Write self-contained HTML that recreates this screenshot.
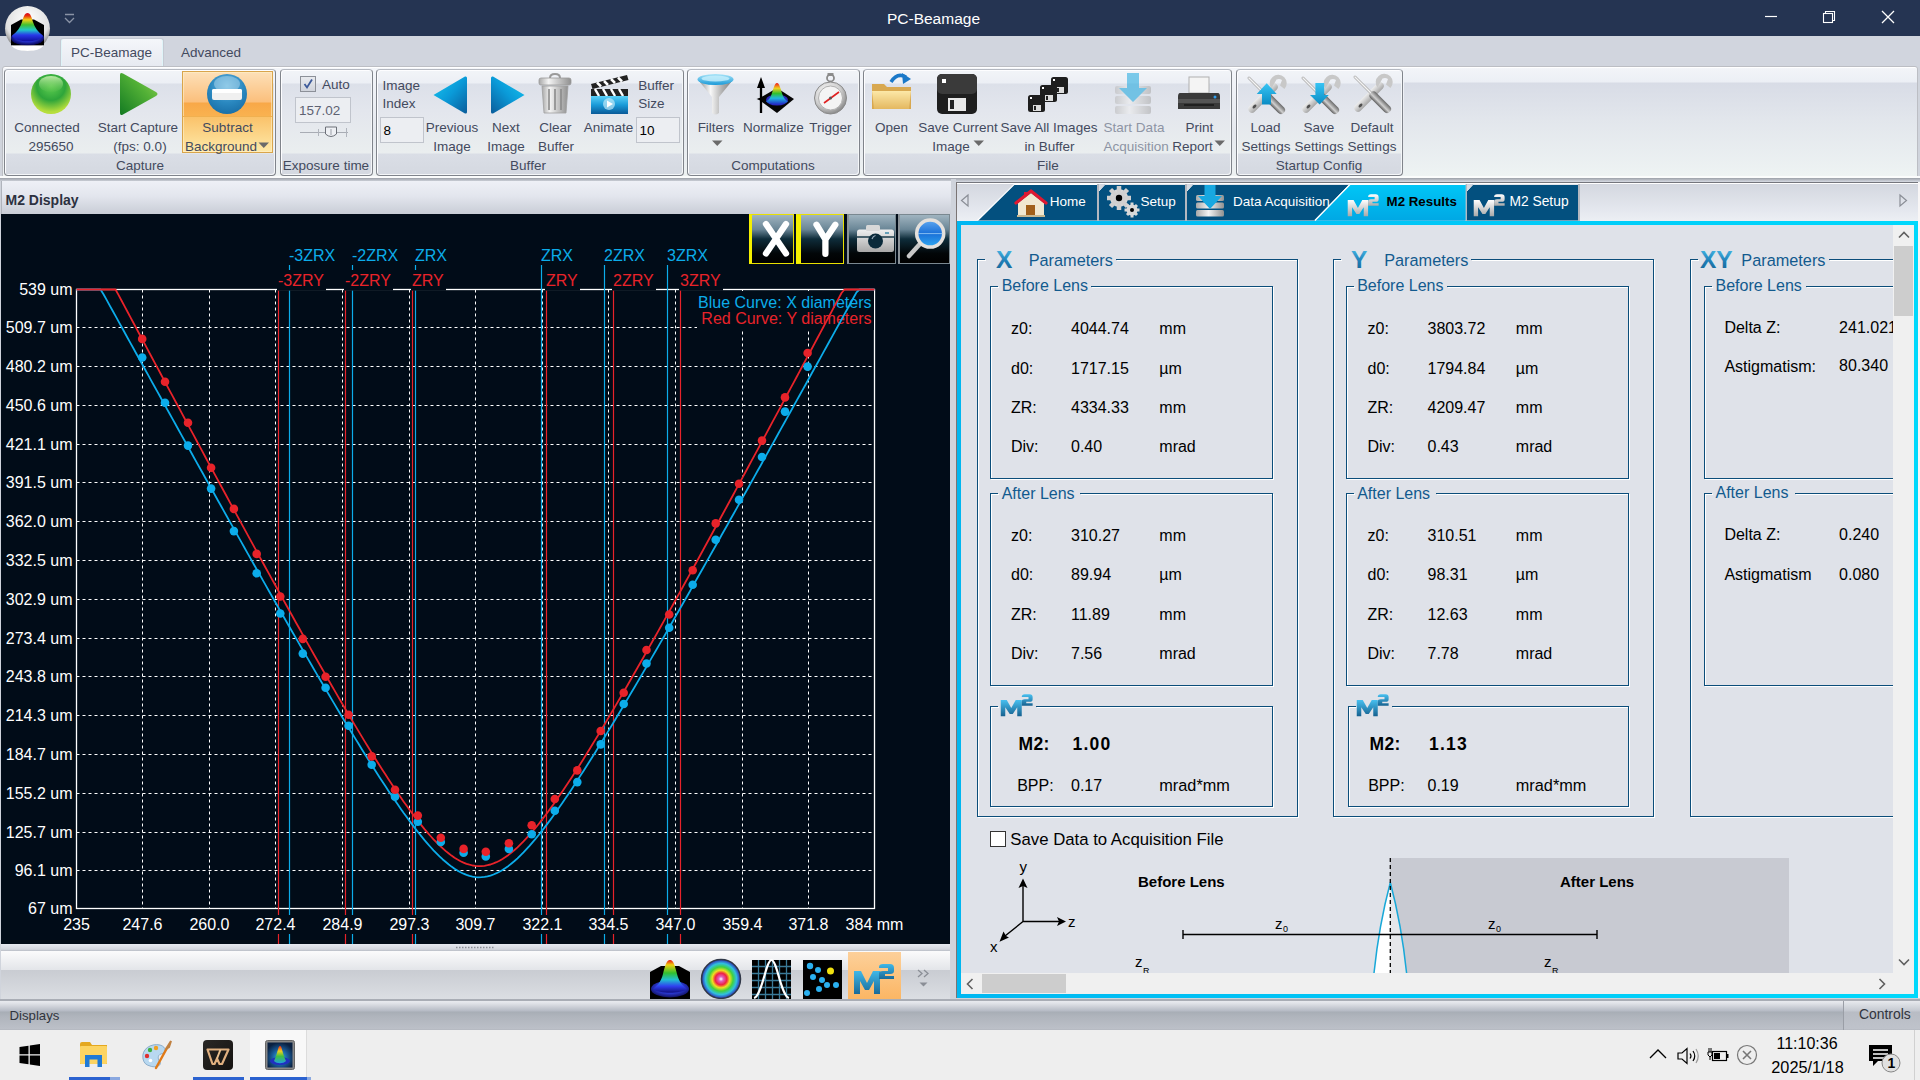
<!DOCTYPE html>
<html><head><meta charset="utf-8"><title>PC-Beamage</title>
<style>
*{box-sizing:border-box;margin:0;padding:0}
html,body{width:1920px;height:1080px;overflow:hidden}
body{position:relative;background:#d0d4dc;font-family:"Liberation Sans",sans-serif;color:#000}
.a{position:absolute}
.t{position:absolute;white-space:nowrap;line-height:1}
svg{overflow:visible}
</style></head><body>
<div class="a" style="left:0px;top:0px;width:1920px;height:36px;background:#253452"></div>
<div class="t" style="top:10.68px;font-size:15.5px;color:#fff;left:633.50px;width:600px;text-align:center;">PC-Beamage</div>
<svg class="a" style="left:1755px;top:7px;" width="150" height="20" viewBox="0 0 150 20"><line x1="10" y1="9.5" x2="22" y2="9.5" stroke="#fff" stroke-width="1.2"/><rect x="68.5" y="6.5" width="9" height="9" fill="none" stroke="#fff" stroke-width="1.1"/><path d="M70.5 6.5 V4.5 H79.5 V13.5 H77.5" fill="none" stroke="#fff" stroke-width="1.1"/><path d="M127 4 L139 16 M139 4 L127 16" stroke="#fff" stroke-width="1.3"/></svg>
<svg class="a" style="left:64px;top:13px;" width="12" height="12" viewBox="0 0 12 12"><path d="M1 1.5 H10" stroke="#8a93a6" stroke-width="1.5"/><path d="M1 5 L5.5 9.5 L10 5" fill="none" stroke="#8a93a6" stroke-width="1.3"/></svg>
<div class="a" style="left:0px;top:36px;width:1920px;height:31px;background:#d1d5de"></div>
<svg class="a" style="left:4px;top:5px;" width="48" height="48" viewBox="0 0 48 48"><defs><radialGradient id="orbg" cx="50%" cy="30%" r="65%"><stop offset="0" stop-color="#ffffff"/><stop offset="0.75" stop-color="#e0e0e0"/><stop offset="1" stop-color="#8a8a8a"/></radialGradient><linearGradient id="cone" x1="0" y1="0" x2="0" y2="1"><stop offset="0" stop-color="#d80820"/><stop offset="0.1" stop-color="#e83010"/><stop offset="0.24" stop-color="#f0d018"/><stop offset="0.42" stop-color="#40c030"/><stop offset="0.6" stop-color="#20c8c8"/><stop offset="0.78" stop-color="#2838e8"/><stop offset="1" stop-color="#1010a0"/></linearGradient><radialGradient id="coneb" cx="50%" cy="40%" r="55%"><stop offset="0" stop-color="#30d0d8"/><stop offset="0.5" stop-color="#3040f0"/><stop offset="1" stop-color="#0a0a60"/></radialGradient></defs><circle cx="23.5" cy="23.5" r="22.5" fill="url(#orbg)"/><path d="M7 20 L17 14.5 H30 L40 20 V40.5 H7 Z" fill="#000"/><ellipse cx="23.5" cy="33" rx="16.5" ry="7.5" fill="url(#coneb)"/><path d="M23.5 8 C20.5 8 19.5 12 18 17 C16.5 22 13 27 8 31 C12 38 35 38 39 31 C34 27 30.5 22 29 17 C27.5 12 26.5 8 23.5 8 Z" fill="url(#cone)"/><path d="M7 40.5 H40 Q35 46 23.5 46 Q12 46 7 40.5Z" fill="#fff"/></svg>
<div class="a" style="left:60px;top:38px;width:104px;height:30px;background:linear-gradient(#f4f6fa,#e6e9f0);border:1px solid #c5cad3;border-bottom:none;border-radius:3px 3px 0 0;box-shadow:inset 1px 0 0 #dff4f8, inset -1px 0 0 #dff4f8"></div>
<div class="t" style="top:46.07px;font-size:13.5px;color:#434a5e;left:-188.50px;width:600px;text-align:center;">PC-Beamage</div>
<div class="t" style="top:46.07px;font-size:13.5px;color:#434a5e;left:-89.00px;width:600px;text-align:center;">Advanced</div>
<div class="a" style="left:2px;top:66px;width:1916px;height:113px;background:linear-gradient(#f4f6fa,#e6e9ef 60%,#eef2f2);border:1px solid #bcbec4;border-radius:3px;box-shadow:0 1px 0 #fff inset"></div>
<div class="a" style="left:4px;top:69px;width:272px;height:107px;border:1px solid #80848b;border-top-color:#b4b8c0;border-radius:4px;background:linear-gradient(#f2f4f8 0px,#eceff5 13px,#dce0e9 14px,#e3e6ed 40px,#eaeeef 83px,#dadee6 84px,#d4d8e0 106px);box-shadow:inset 1px 1px 0 #fdfdff, inset -1px -1px 0 #f4f6f8"></div>
<div class="t" style="top:158.77px;font-size:13.5px;color:#434a5e;left:-160.00px;width:600px;text-align:center;">Capture</div>
<div class="a" style="left:280px;top:69px;width:93px;height:107px;border:1px solid #80848b;border-top-color:#b4b8c0;border-radius:4px;background:linear-gradient(#f2f4f8 0px,#eceff5 13px,#dce0e9 14px,#e3e6ed 40px,#eaeeef 83px,#dadee6 84px,#d4d8e0 106px);box-shadow:inset 1px 1px 0 #fdfdff, inset -1px -1px 0 #f4f6f8"></div>
<div class="t" style="top:158.77px;font-size:13.5px;color:#434a5e;left:26.00px;width:600px;text-align:center;">Exposure time</div>
<div class="a" style="left:376px;top:69px;width:308px;height:107px;border:1px solid #80848b;border-top-color:#b4b8c0;border-radius:4px;background:linear-gradient(#f2f4f8 0px,#eceff5 13px,#dce0e9 14px,#e3e6ed 40px,#eaeeef 83px,#dadee6 84px,#d4d8e0 106px);box-shadow:inset 1px 1px 0 #fdfdff, inset -1px -1px 0 #f4f6f8"></div>
<div class="t" style="top:158.77px;font-size:13.5px;color:#434a5e;left:228.00px;width:600px;text-align:center;">Buffer</div>
<div class="a" style="left:687px;top:69px;width:173px;height:107px;border:1px solid #80848b;border-top-color:#b4b8c0;border-radius:4px;background:linear-gradient(#f2f4f8 0px,#eceff5 13px,#dce0e9 14px,#e3e6ed 40px,#eaeeef 83px,#dadee6 84px,#d4d8e0 106px);box-shadow:inset 1px 1px 0 #fdfdff, inset -1px -1px 0 #f4f6f8"></div>
<div class="t" style="top:158.77px;font-size:13.5px;color:#434a5e;left:473.00px;width:600px;text-align:center;">Computations</div>
<div class="a" style="left:863px;top:69px;width:369px;height:107px;border:1px solid #80848b;border-top-color:#b4b8c0;border-radius:4px;background:linear-gradient(#f2f4f8 0px,#eceff5 13px,#dce0e9 14px,#e3e6ed 40px,#eaeeef 83px,#dadee6 84px,#d4d8e0 106px);box-shadow:inset 1px 1px 0 #fdfdff, inset -1px -1px 0 #f4f6f8"></div>
<div class="t" style="top:158.77px;font-size:13.5px;color:#434a5e;left:748.00px;width:600px;text-align:center;">File</div>
<div class="a" style="left:1236px;top:69px;width:167px;height:107px;border:1px solid #80848b;border-top-color:#b4b8c0;border-radius:4px;background:linear-gradient(#f2f4f8 0px,#eceff5 13px,#dce0e9 14px,#e3e6ed 40px,#eaeeef 83px,#dadee6 84px,#d4d8e0 106px);box-shadow:inset 1px 1px 0 #fdfdff, inset -1px -1px 0 #f4f6f8"></div>
<div class="t" style="top:158.77px;font-size:13.5px;color:#434a5e;left:1019.00px;width:600px;text-align:center;">Startup Config</div>
<div class="a" style="left:0px;top:176px;width:1920px;height:2px;background:#fbfcfc"></div>
<div class="a" style="left:0px;top:178px;width:1920px;height:3px;background:linear-gradient(#9ca0a8,#c9cdd5)"></div>
<div class="a" style="left:1404px;top:69px;width:513px;height:107px;background:linear-gradient(#f2f4f8 0px,#eceff5 13px,#d8dce6 14px,#e2e6ec 50px,#eef3f3 107px)"></div>
<svg class="a" style="left:29px;top:72px;" width="44" height="44" viewBox="0 0 44 44"><defs><radialGradient id="gs" cx="50%" cy="30%" r="65%"><stop offset="0" stop-color="#5fcf50"/><stop offset="0.55" stop-color="#2ea53a"/><stop offset="1" stop-color="#b6de3c"/></radialGradient><linearGradient id="gsh" x1="0" y1="0" x2="0" y2="1"><stop offset="0" stop-color="#c8f0b0" stop-opacity="0.9"/><stop offset="1" stop-color="#60c050" stop-opacity="0.2"/></linearGradient></defs><circle cx="22" cy="22" r="20" fill="url(#gs)"/><ellipse cx="22" cy="12" rx="12" ry="8" fill="url(#gsh)"/></svg>
<div class="t" style="top:121.07px;font-size:13.5px;color:#434a5e;left:-253.00px;width:600px;text-align:center;">Connected</div>
<div class="t" style="top:139.77px;font-size:13.5px;color:#434a5e;left:-249.00px;width:600px;text-align:center;">295650</div>
<svg class="a" style="left:118px;top:72px;" width="42" height="44" viewBox="0 0 42 44"><defs><linearGradient id="pl" x1="0" y1="1" x2="1" y2="0"><stop offset="0" stop-color="#137a22"/><stop offset="0.6" stop-color="#52b036"/><stop offset="1" stop-color="#90d050"/></linearGradient></defs><path d="M2 3 Q2 0 5 1.5 L38 20 Q41 22 38 24 L5 42.5 Q2 44 2 41 Z" fill="url(#pl)"/></svg>
<div class="t" style="top:121.07px;font-size:13.5px;color:#434a5e;left:-162.00px;width:600px;text-align:center;">Start Capture</div>
<div class="t" style="top:139.77px;font-size:13.5px;color:#434a5e;left:-160.00px;width:600px;text-align:center;">(fps: 0.0)</div>
<div class="a" style="left:182px;top:71px;width:91px;height:82px;border:1px solid #d9a54c;background:linear-gradient(#fde0b8 0,#fbbf7c 30px,#f8a848 31px,#f9b250 44px,#fac26a 45px,#fee9a8 80px);box-shadow:inset 0 0 0 1px rgba(255,240,200,0.6)"></div>
<div class="a" style="left:183px;top:116px;width:89px;height:1px;background:#f0b050"></div>
<svg class="a" style="left:205px;top:72px;" width="44" height="44" viewBox="0 0 44 44"><defs><radialGradient id="bs" cx="50%" cy="30%" r="70%"><stop offset="0" stop-color="#6ab8e0"/><stop offset="0.6" stop-color="#2a88c0"/><stop offset="1" stop-color="#1a70a8"/></radialGradient></defs><circle cx="22" cy="22" r="20" fill="url(#bs)"/><ellipse cx="22" cy="12" rx="13" ry="8" fill="#bfe0f2" opacity="0.45"/><rect x="7" y="17" width="30" height="11" rx="2" fill="#f0f0f0"/><rect x="7" y="17" width="30" height="4" rx="2" fill="#ffffff"/></svg>
<div class="t" style="top:121.07px;font-size:13.5px;color:#434a5e;left:-72.50px;width:600px;text-align:center;">Subtract</div>
<div class="t" style="top:139.77px;font-size:13.5px;color:#434a5e;left:-79.00px;width:600px;text-align:center;">Background</div>
<svg class="a" style="left:258px;top:142px;" width="12" height="8" viewBox="0 0 12 8"><path d="M0.5 0.5 H11 L5.75 6 Z" fill="#6a6a6a"/></svg>
<div class="a" style="left:300px;top:76px;width:16px;height:16px;border:1px solid #8c9098;background:linear-gradient(#e8eaee,#d0d4dc)"></div>
<svg class="a" style="left:302px;top:78px;" width="12" height="12" viewBox="0 0 12 12"><path d="M2.5 6 L5 9.5 L10 1.5" fill="none" stroke="#3c5a9a" stroke-width="1.8"/></svg>
<div class="t" style="top:77.87px;font-size:13.5px;color:#434a5e;left:322.00px;">Auto</div>
<div class="a" style="left:295px;top:97px;width:56px;height:26px;border:1px solid #c0c4cc;background:#eceef2"></div>
<div class="t" style="top:104.07px;font-size:13.5px;color:#5e6272;left:299.00px;">157.02</div>
<svg class="a" style="left:298px;top:124px;" width="52" height="16" viewBox="0 0 52 16"><line x1="2" y1="8.5" x2="50" y2="8.5" stroke="#a8acb4"/><line x1="20.5" y1="5" x2="20.5" y2="12" stroke="#b0b4bc"/><line x1="48.5" y1="4" x2="48.5" y2="13" stroke="#b0b4bc"/><path d="M27.5 3 H38.5 V10 Q33 15 27.5 10 Z" fill="#eef0f4" stroke="#6c7078"/><line x1="33" y1="5" x2="33" y2="11" stroke="#9ca0a8"/></svg>
<div class="t" style="top:78.77px;font-size:13.5px;color:#434a5e;left:382.50px;">Image</div>
<div class="t" style="top:97.37px;font-size:13.5px;color:#434a5e;left:382.50px;">Index</div>
<div class="a" style="left:380px;top:117px;width:44px;height:26px;border:1px solid #c0c4cc;background:#eceef2"></div>
<div class="t" style="top:124.07px;font-size:13.5px;color:#000;left:383.50px;">8</div>
<svg class="a" style="left:432px;top:75px;" width="37" height="40" viewBox="0 0 37 40"><defs><linearGradient id="tl" x1="1" y1="1" x2="0" y2="0"><stop offset="0" stop-color="#0a5c9a"/><stop offset="0.5" stop-color="#0a9ad8"/><stop offset="1" stop-color="#18c8f0"/></linearGradient></defs><path d="M1.5 20 L33 1.5 Q35 1 35 3 V37 Q35 39 33 38.5 Z" fill="url(#tl)"/></svg>
<div class="t" style="top:121.07px;font-size:13.5px;color:#434a5e;left:152.00px;width:600px;text-align:center;">Previous</div>
<div class="t" style="top:139.77px;font-size:13.5px;color:#434a5e;left:152.00px;width:600px;text-align:center;">Image</div>
<svg class="a" style="left:489px;top:75px;" width="37" height="40" viewBox="0 0 37 40"><defs><linearGradient id="tr" x1="0" y1="1" x2="1" y2="0"><stop offset="0" stop-color="#0a5c9a"/><stop offset="0.5" stop-color="#0a9ad8"/><stop offset="1" stop-color="#18c8f0"/></linearGradient></defs><path d="M35.5 20 L4 1.5 Q2 1 2 3 V37 Q2 39 4 38.5 Z" fill="url(#tr)"/></svg>
<div class="t" style="top:121.07px;font-size:13.5px;color:#434a5e;left:206.00px;width:600px;text-align:center;">Next</div>
<div class="t" style="top:139.77px;font-size:13.5px;color:#434a5e;left:206.00px;width:600px;text-align:center;">Image</div>
<svg class="a" style="left:537px;top:73px;" width="36" height="42" viewBox="0 0 36 42"><defs><linearGradient id="tc" x1="0" y1="0" x2="1" y2="0"><stop offset="0" stop-color="#a8a8a8"/><stop offset="0.3" stop-color="#f4f4f4"/><stop offset="0.6" stop-color="#c8c8c8"/><stop offset="1" stop-color="#909090"/></linearGradient></defs><path d="M13 5 Q13 1 18 1 Q23 1 23 5" fill="none" stroke="#9a9a9a" stroke-width="2"/><rect x="2" y="5" width="32" height="7" rx="2" fill="url(#tc)" stroke="#9a9a9a" stroke-width="0.8"/><path d="M5 13 H31 L29 40 H7 Z" fill="url(#tc)" stroke="#a0a0a0" stroke-width="0.8"/><path d="M12 16 V37 M18 16 V37 M24 16 V37" stroke="#8a8a8a" stroke-width="1.6"/></svg>
<div class="t" style="top:121.07px;font-size:13.5px;color:#434a5e;left:255.50px;width:600px;text-align:center;">Clear</div>
<div class="t" style="top:139.77px;font-size:13.5px;color:#434a5e;left:256.00px;width:600px;text-align:center;">Buffer</div>
<svg class="a" style="left:589px;top:72px;" width="41" height="43" viewBox="0 0 41 43"><defs><linearGradient id="cl" x1="0" y1="0" x2="0" y2="1"><stop offset="0" stop-color="#5ad0f8"/><stop offset="0.5" stop-color="#1a9ad8"/><stop offset="1" stop-color="#0a5a98"/></linearGradient></defs><path d="M2 12 L38 3 L39.5 8 L3.5 17 Z" fill="#222"/><path d="M8 10.5 L12 14.5 M15 9 L19 13 M22 7 L26 11 M29 5.5 L33 9.5" stroke="#fff" stroke-width="2.5"/><rect x="2" y="17" width="37" height="7" fill="#222"/><path d="M6 17 L10 24 M14 17 L18 24 M22 17 L26 24 M30 17 L34 24" stroke="#fff" stroke-width="2.5"/><rect x="2" y="24" width="37" height="18" fill="url(#cl)"/><circle cx="20" cy="32" r="6" fill="#bfe8f8" opacity="0.7"/><path d="M18 28.5 L24 32 L18 35.5Z" fill="#fff"/></svg>
<div class="t" style="top:121.07px;font-size:13.5px;color:#434a5e;left:308.50px;width:600px;text-align:center;">Animate</div>
<div class="t" style="top:78.77px;font-size:13.5px;color:#434a5e;left:638.30px;">Buffer</div>
<div class="t" style="top:97.37px;font-size:13.5px;color:#434a5e;left:638.30px;">Size</div>
<div class="a" style="left:636px;top:117px;width:44px;height:26px;border:1px solid #c0c4cc;background:#eceef2"></div>
<div class="t" style="top:124.07px;font-size:13.5px;color:#000;left:639.50px;">10</div>
<svg class="a" style="left:695px;top:72px;" width="41" height="43" viewBox="0 0 41 43"><defs><linearGradient id="fu" x1="0" y1="0" x2="1" y2="0"><stop offset="0" stop-color="#909090"/><stop offset="0.35" stop-color="#f8f8f8"/><stop offset="0.7" stop-color="#b0b0b0"/><stop offset="1" stop-color="#808080"/></linearGradient><linearGradient id="fr" x1="0" y1="0" x2="0" y2="1"><stop offset="0" stop-color="#a8e4f8"/><stop offset="1" stop-color="#1a9ad8"/></linearGradient></defs><path d="M4 9 Q20 17 37 9 L24 25 V41 Q20 44 17 41 V25 Z" fill="url(#fu)"/><ellipse cx="20.5" cy="7.5" rx="18" ry="5.5" fill="url(#fr)"/><ellipse cx="20.5" cy="6.5" rx="14" ry="3" fill="#c8f0fc" opacity="0.8"/></svg>
<div class="t" style="top:121.07px;font-size:13.5px;color:#434a5e;left:416.00px;width:600px;text-align:center;">Filters</div>
<svg class="a" style="left:712px;top:140px;" width="11" height="7" viewBox="0 0 11 7"><path d="M0 0.5 H10.5 L5.25 6 Z" fill="#6a6a6a"/></svg>
<svg class="a" style="left:752px;top:74px;" width="42" height="42" viewBox="0 0 42 42"><defs><linearGradient id="nb" x1="0" y1="0" x2="0" y2="1"><stop offset="0" stop-color="#f01818"/><stop offset="0.25" stop-color="#f0d020"/><stop offset="0.5" stop-color="#30c030"/><stop offset="0.72" stop-color="#20b8e0"/><stop offset="1" stop-color="#2030c8"/></linearGradient></defs><path d="M6 25 L25 14 L42 25 L25 39 Z" fill="#050505"/><ellipse cx="25" cy="26" rx="11" ry="5.5" fill="#2a2ac0"/><path d="M25 9 C22.5 9 21.5 15 19 22 C17 26 15 27 14 27.5 C18 31 32 31 36 27.5 C35 27 33 26 31 22 C28.5 15 27.5 9 25 9Z" fill="url(#nb)"/><path d="M9 39 V8" stroke="#000" stroke-width="2.3"/><path d="M5 14 L9 3 L13 14 Z" fill="#000"/><path d="M4.5 25 L9 23.5 V26.5Z" fill="#000"/></svg>
<div class="t" style="top:121.07px;font-size:13.5px;color:#434a5e;left:473.50px;width:600px;text-align:center;">Normalize</div>
<svg class="a" style="left:813px;top:72px;" width="35" height="43" viewBox="0 0 35 43"><defs><radialGradient id="sw" cx="40%" cy="35%" r="70%"><stop offset="0" stop-color="#ffffff"/><stop offset="0.6" stop-color="#d0d0d0"/><stop offset="1" stop-color="#808080"/></radialGradient></defs><rect x="14.5" y="1" width="6" height="3" fill="#909090"/><circle cx="17.5" cy="6" r="3.5" fill="none" stroke="#8a8a8a" stroke-width="1.8"/><circle cx="17.5" cy="26" r="16" fill="url(#sw)" stroke="#8a8a8a" stroke-width="1"/><circle cx="17.5" cy="26" r="12" fill="#f4f4f4" stroke="#b0b0b0" stroke-width="1"/><path d="M11 31 L26 20" stroke="#e02020" stroke-width="1.6"/><circle cx="17.5" cy="26" r="1.5" fill="#555"/></svg>
<div class="t" style="top:121.07px;font-size:13.5px;color:#434a5e;left:530.50px;width:600px;text-align:center;">Trigger</div>
<svg class="a" style="left:869px;top:72px;" width="46" height="40" viewBox="0 0 46 40"><defs><linearGradient id="fo" x1="0" y1="0" x2="0" y2="1"><stop offset="0" stop-color="#fce8a8"/><stop offset="1" stop-color="#e4b860"/></linearGradient></defs><path d="M3 12 H15 L18 15 H42 V37 H3 Z" fill="#d8a850"/><path d="M3 19 H42 L40 37 H5 Z" fill="url(#fo)"/><path d="M22 10 Q28 0 37 5" fill="none" stroke="#1a78c8" stroke-width="3.5"/><path d="M33 1 L42 7 L34 12 Z" fill="#1a78c8"/></svg>
<div class="t" style="top:121.07px;font-size:13.5px;color:#434a5e;left:591.50px;width:600px;text-align:center;">Open</div>
<svg class="a" style="left:936px;top:73px;" width="42" height="42" viewBox="0 0 42 42"><rect x="1" y="1" width="40" height="40" rx="5" fill="#1e1e1e"/><rect x="1" y="1" width="40" height="20" rx="5" fill="#3a3a3a"/><rect x="6" y="6" width="4" height="4" fill="#fff"/><rect x="12" y="25" width="18" height="13" fill="#e8e8e8"/><rect x="14" y="27" width="4" height="9" fill="#222"/></svg>
<div class="t" style="top:121.07px;font-size:13.5px;color:#434a5e;left:658.00px;width:600px;text-align:center;">Save Current</div>
<div class="t" style="top:139.77px;font-size:13.5px;color:#434a5e;left:651.00px;width:600px;text-align:center;">Image</div>
<svg class="a" style="left:973px;top:140px;" width="12" height="8" viewBox="0 0 12 8"><path d="M0.5 0.5 H11 L5.75 6 Z" fill="#6a6a6a"/></svg>
<svg class="a" style="left:1027px;top:76px;" width="44" height="38" viewBox="0 0 44 38"><rect x="24" y="1" width="17" height="17" rx="2.5" fill="#1e1e1e"/><rect x="26" y="3" width="2" height="2" fill="#fff"/><rect x="29" y="11" width="8" height="6" fill="#ddd"/><rect x="30" y="12" width="2" height="4" fill="#222"/><rect x="13" y="9" width="17" height="17" rx="2.5" fill="#1e1e1e"/><rect x="15" y="11" width="2" height="2" fill="#fff"/><rect x="18" y="19" width="8" height="6" fill="#ddd"/><rect x="19" y="20" width="2" height="4" fill="#222"/><rect x="1" y="19" width="17" height="17" rx="2.5" fill="#1e1e1e"/><rect x="3" y="21" width="2" height="2" fill="#fff"/><rect x="6" y="29" width="8" height="6" fill="#ddd"/><rect x="7" y="30" width="2" height="4" fill="#222"/></svg>
<div class="t" style="top:121.07px;font-size:13.5px;color:#434a5e;left:749.00px;width:600px;text-align:center;">Save All Images</div>
<div class="t" style="top:139.77px;font-size:13.5px;color:#434a5e;left:749.50px;width:600px;text-align:center;">in Buffer</div>
<svg class="a" style="left:1113px;top:72px;" width="40" height="43" viewBox="0 0 40 43"><defs><linearGradient id="db" x1="0" y1="0" x2="1" y2="0"><stop offset="0" stop-color="#b8b8b8"/><stop offset="0.4" stop-color="#f0f0f0"/><stop offset="1" stop-color="#a8a8a8"/></linearGradient></defs><g opacity="0.55"><rect x="2" y="14" width="36" height="8" rx="2" fill="url(#db)"/><rect x="2" y="24" width="36" height="8" rx="2" fill="url(#db)"/><rect x="2" y="34" width="36" height="8" rx="2" fill="url(#db)"/><path d="M14 1 H26 V16 H34 L20 30 L6 16 H14 Z" fill="#1aa8e0"/></g></svg>
<div class="t" style="top:121.07px;font-size:13.5px;color:#8d94a4;left:834.00px;width:600px;text-align:center;">Start Data</div>
<div class="t" style="top:139.77px;font-size:13.5px;color:#8d94a4;left:836.20px;width:600px;text-align:center;">Acquisition</div>
<svg class="a" style="left:1177px;top:75px;" width="44" height="40" viewBox="0 0 44 40"><rect x="12" y="2" width="20" height="16" fill="#f4f4f4" stroke="#b0b0b0"/><path d="M3 18 H41 Q43 18 43 22 V34 H1 V22 Q1 18 3 18Z" fill="#3a3a3a"/><rect x="1" y="24" width="42" height="4" fill="#555"/><rect x="7" y="29" width="30" height="2" fill="#202020"/><circle cx="38" cy="22" r="1.5" fill="#30a0f0"/></svg>
<div class="t" style="top:121.07px;font-size:13.5px;color:#434a5e;left:899.30px;width:600px;text-align:center;">Print</div>
<div class="t" style="top:139.77px;font-size:13.5px;color:#434a5e;left:892.50px;width:600px;text-align:center;">Report</div>
<svg class="a" style="left:1214px;top:140px;" width="12" height="8" viewBox="0 0 12 8"><path d="M0.5 0.5 H11 L5.75 6 Z" fill="#6a6a6a"/></svg>
<svg class="a" style="left:1246px;top:75px;" width="40" height="38" viewBox="0 0 40 38"><defs><linearGradient id="sdha" gradientUnits="userSpaceOnUse" x1="24" y1="32" x2="32" y2="24"><stop offset="0" stop-color="#202020"/><stop offset="0.45" stop-color="#d0d0d0"/><stop offset="1" stop-color="#404040"/></linearGradient><linearGradient id="wrha" gradientUnits="userSpaceOnUse" x1="11" y1="22" x2="17" y2="28"><stop offset="0" stop-color="#f8f8f8"/><stop offset="1" stop-color="#a8a8a8"/></linearGradient><linearGradient id="arra" x1="0" y1="0" x2="0" y2="1"><stop offset="0" stop-color="#38c4f4"/><stop offset="1" stop-color="#0a8cc4"/></linearGradient></defs><path d="M28 12 L6 34" stroke="url(#wrha)" stroke-width="7.5" stroke-linecap="round"/><ellipse cx="8.5" cy="31.5" rx="2.4" ry="1.4" transform="rotate(-45 8.5 31.5)" fill="#505050"/><path d="M25.5 13.5 A8.5 8.5 0 1 1 38.5 14 L34 10.5 L36 5 A5.5 5.5 0 0 0 30.5 4.5 Z" fill="#c8c8c8"/><path d="M3 3 L19 19" stroke="#b0b0b0" stroke-width="3" stroke-linecap="round"/><path d="M3 3 L19 19" stroke="#f4f4f4" stroke-width="1.2" stroke-linecap="round"/><path d="M21.5 21.5 L35 35" stroke="url(#sdha)" stroke-width="8" stroke-linecap="round"/><path d="M20.7 8.3 L30.7 19 H25 V29.6 H16 V19 H10.7 Z" fill="url(#arra)"/></svg>
<div class="t" style="top:121.07px;font-size:13.5px;color:#434a5e;left:965.50px;width:600px;text-align:center;">Load</div>
<div class="t" style="top:139.77px;font-size:13.5px;color:#434a5e;left:966.00px;width:600px;text-align:center;">Settings</div>
<svg class="a" style="left:1300px;top:75px;" width="40" height="38" viewBox="0 0 40 38"><defs><linearGradient id="sdhb" gradientUnits="userSpaceOnUse" x1="24" y1="32" x2="32" y2="24"><stop offset="0" stop-color="#202020"/><stop offset="0.45" stop-color="#d0d0d0"/><stop offset="1" stop-color="#404040"/></linearGradient><linearGradient id="wrhb" gradientUnits="userSpaceOnUse" x1="11" y1="22" x2="17" y2="28"><stop offset="0" stop-color="#f8f8f8"/><stop offset="1" stop-color="#a8a8a8"/></linearGradient><linearGradient id="arrb" x1="0" y1="0" x2="0" y2="1"><stop offset="0" stop-color="#38c4f4"/><stop offset="1" stop-color="#0a8cc4"/></linearGradient></defs><path d="M28 12 L6 34" stroke="url(#wrhb)" stroke-width="7.5" stroke-linecap="round"/><ellipse cx="8.5" cy="31.5" rx="2.4" ry="1.4" transform="rotate(-45 8.5 31.5)" fill="#505050"/><path d="M25.5 13.5 A8.5 8.5 0 1 1 38.5 14 L34 10.5 L36 5 A5.5 5.5 0 0 0 30.5 4.5 Z" fill="#c8c8c8"/><path d="M3 3 L19 19" stroke="#b0b0b0" stroke-width="3" stroke-linecap="round"/><path d="M3 3 L19 19" stroke="#f4f4f4" stroke-width="1.2" stroke-linecap="round"/><path d="M21.5 21.5 L35 35" stroke="url(#sdhb)" stroke-width="8" stroke-linecap="round"/><path d="M15.4 7.9 H24.2 V20 H28.75 L19.6 29.6 L10 20 H15.4 Z" fill="url(#arrb)"/></svg>
<div class="t" style="top:121.07px;font-size:13.5px;color:#434a5e;left:1019.00px;width:600px;text-align:center;">Save</div>
<div class="t" style="top:139.77px;font-size:13.5px;color:#434a5e;left:1019.00px;width:600px;text-align:center;">Settings</div>
<svg class="a" style="left:1352px;top:74px;" width="40" height="38" viewBox="0 0 40 38"><defs><linearGradient id="sdhc" gradientUnits="userSpaceOnUse" x1="24" y1="32" x2="32" y2="24"><stop offset="0" stop-color="#202020"/><stop offset="0.45" stop-color="#d0d0d0"/><stop offset="1" stop-color="#404040"/></linearGradient><linearGradient id="wrhc" gradientUnits="userSpaceOnUse" x1="11" y1="22" x2="17" y2="28"><stop offset="0" stop-color="#f8f8f8"/><stop offset="1" stop-color="#a8a8a8"/></linearGradient><linearGradient id="arrc" x1="0" y1="0" x2="0" y2="1"><stop offset="0" stop-color="#38c4f4"/><stop offset="1" stop-color="#0a8cc4"/></linearGradient></defs><path d="M28 12 L6 34" stroke="url(#wrhc)" stroke-width="7.5" stroke-linecap="round"/><ellipse cx="8.5" cy="31.5" rx="2.4" ry="1.4" transform="rotate(-45 8.5 31.5)" fill="#505050"/><path d="M25.5 13.5 A8.5 8.5 0 1 1 38.5 14 L34 10.5 L36 5 A5.5 5.5 0 0 0 30.5 4.5 Z" fill="#c8c8c8"/><path d="M3 3 L19 19" stroke="#b0b0b0" stroke-width="3" stroke-linecap="round"/><path d="M3 3 L19 19" stroke="#f4f4f4" stroke-width="1.2" stroke-linecap="round"/><path d="M21.5 21.5 L35 35" stroke="url(#sdhc)" stroke-width="8" stroke-linecap="round"/></svg>
<div class="t" style="top:121.07px;font-size:13.5px;color:#434a5e;left:1072.00px;width:600px;text-align:center;">Default</div>
<div class="t" style="top:139.77px;font-size:13.5px;color:#434a5e;left:1072.00px;width:600px;text-align:center;">Settings</div>
<div class="a" style="left:1px;top:181px;width:950px;height:33px;background:linear-gradient(#eef0f6,#e3e6ee 45%,#c9cdd6);border-left:1px solid #b0b4bc"></div>
<div class="t" style="top:193.35px;font-size:14px;color:#2c3140;font-weight:bold;left:5.50px;">M2 Display</div>
<svg class="a" style="left:1px;top:214px" width="949" height="730" viewBox="1 214 949 730" font-family="Liberation Sans" font-size="16" fill="#fff"><rect x="1" y="214" width="949" height="730" fill="#010c18"/><path d="M76.5 327.5H874.5M76.5 366.5H874.5M76.5 405.5H874.5M76.5 444.5H874.5M76.5 482.5H874.5M76.5 521.5H874.5M76.5 560.5H874.5M76.5 599.5H874.5M76.5 638.5H874.5M76.5 676.5H874.5M76.5 715.5H874.5M76.5 754.5H874.5M76.5 793.5H874.5M76.5 832.5H874.5M76.5 870.5H874.5M142.5 289.5V908.5M209.5 289.5V908.5M275.5 289.5V908.5M342.5 289.5V908.5M409.5 289.5V908.5M475.5 289.5V908.5M542.5 289.5V908.5M608.5 289.5V908.5M675.5 289.5V908.5M742.5 289.5V908.5M808.5 289.5V908.5" stroke="#fff" stroke-width="1" stroke-dasharray="3 3" fill="none"/><rect x="76.5" y="289.5" width="798.0" height="619.0" fill="none" stroke="#fff" stroke-width="1.3"/><text x="72.5" y="295.3" text-anchor="end">539 um</text><text x="72.5" y="333.3" text-anchor="end">509.7 um</text><text x="72.5" y="372.3" text-anchor="end">480.2 um</text><text x="72.5" y="411.3" text-anchor="end">450.6 um</text><text x="72.5" y="450.3" text-anchor="end">421.1 um</text><text x="72.5" y="488.3" text-anchor="end">391.5 um</text><text x="72.5" y="527.3" text-anchor="end">362.0 um</text><text x="72.5" y="566.3" text-anchor="end">332.5 um</text><text x="72.5" y="605.3" text-anchor="end">302.9 um</text><text x="72.5" y="644.3" text-anchor="end">273.4 um</text><text x="72.5" y="682.3" text-anchor="end">243.8 um</text><text x="72.5" y="721.3" text-anchor="end">214.3 um</text><text x="72.5" y="760.3" text-anchor="end">184.7 um</text><text x="72.5" y="799.3" text-anchor="end">155.2 um</text><text x="72.5" y="838.3" text-anchor="end">125.7 um</text><text x="72.5" y="876.3" text-anchor="end">96.1 um</text><text x="72.5" y="914.3" text-anchor="end">67 um</text><path d="M289.5 265V944M352.5 265V944M415.5 265V944M541.5 265V944M604.5 265V944M667.5 265V944" stroke="#0cacea" stroke-width="1.2" fill="none"/><path d="M278.5 290V944M345.5 290V944M412.5 290V944M546.5 290V944M613.5 290V944M680.5 290V944" stroke="#e8232a" stroke-width="1.2" fill="none"/><rect x="62" y="915" width="29" height="19" fill="#010c18"/><text x="76.5" y="930.3" text-anchor="middle">235</text><rect x="121" y="915" width="42" height="19" fill="#010c18"/><text x="142.5" y="930.3" text-anchor="middle">247.6</text><rect x="188" y="915" width="42" height="19" fill="#010c18"/><text x="209.5" y="930.3" text-anchor="middle">260.0</text><rect x="254" y="915" width="42" height="19" fill="#010c18"/><text x="275.5" y="930.3" text-anchor="middle">272.4</text><rect x="321" y="915" width="42" height="19" fill="#010c18"/><text x="342.5" y="930.3" text-anchor="middle">284.9</text><rect x="388" y="915" width="42" height="19" fill="#010c18"/><text x="409.5" y="930.3" text-anchor="middle">297.3</text><rect x="454" y="915" width="42" height="19" fill="#010c18"/><text x="475.5" y="930.3" text-anchor="middle">309.7</text><rect x="521" y="915" width="42" height="19" fill="#010c18"/><text x="542.5" y="930.3" text-anchor="middle">322.1</text><rect x="587" y="915" width="42" height="19" fill="#010c18"/><text x="608.5" y="930.3" text-anchor="middle">334.5</text><rect x="654" y="915" width="42" height="19" fill="#010c18"/><text x="675.5" y="930.3" text-anchor="middle">347.0</text><rect x="721" y="915" width="42" height="19" fill="#010c18"/><text x="742.5" y="930.3" text-anchor="middle">359.4</text><rect x="787" y="915" width="42" height="19" fill="#010c18"/><text x="808.5" y="930.3" text-anchor="middle">371.8</text><rect x="845" y="915" width="60" height="19" fill="#010c18"/><text x="874.5" y="930.3" text-anchor="middle">384 mm</text><rect x="288" y="245" width="49" height="20" fill="#010c18"/><text x="289.0" y="260.8" fill="#0cacea">-3ZRX</text><rect x="352" y="245" width="49" height="20" fill="#010c18"/><text x="352.0" y="260.8" fill="#0cacea">-2ZRX</text><rect x="414" y="245" width="35" height="20" fill="#010c18"/><text x="415.0" y="260.8" fill="#0cacea">ZRX</text><rect x="540" y="245" width="35" height="20" fill="#010c18"/><text x="541.0" y="260.8" fill="#0cacea">ZRX</text><rect x="604" y="245" width="44" height="20" fill="#010c18"/><text x="604.0" y="260.8" fill="#0cacea">2ZRX</text><rect x="666" y="245" width="44" height="20" fill="#010c18"/><text x="667.0" y="260.8" fill="#0cacea">3ZRX</text><rect x="277" y="270" width="49" height="20.6" fill="#010c18"/><text x="278.0" y="285.8" fill="#e8232a">-3ZRY</text><rect x="344" y="270" width="49" height="20.6" fill="#010c18"/><text x="345.0" y="285.8" fill="#e8232a">-2ZRY</text><rect x="411" y="270" width="35" height="20.6" fill="#010c18"/><text x="412.0" y="285.8" fill="#e8232a">ZRY</text><rect x="545" y="270" width="35" height="20.6" fill="#010c18"/><text x="546.0" y="285.8" fill="#e8232a">ZRY</text><rect x="612" y="270" width="44" height="20.6" fill="#010c18"/><text x="613.0" y="285.8" fill="#e8232a">2ZRY</text><rect x="679" y="270" width="44" height="20.6" fill="#010c18"/><text x="680.0" y="285.8" fill="#e8232a">3ZRY</text><rect x="697" y="291" width="177" height="39" fill="#010c18"/><text x="871.5" y="308.3" text-anchor="end" fill="#0cacea">Blue Curve: X diameters</text><text x="871.5" y="324.2" text-anchor="end" fill="#e8232a">Red Curve: Y diameters</text><path d="M76.5 289.5L79.5 289.5L82.5 289.5L85.5 289.5L88.5 289.5L91.5 289.5L94.5 289.5L97.5 289.5L100.5 289.5L103.5 294.2L106.5 299.6L109.5 305.1L112.5 310.5L115.5 315.9L118.5 321.4L121.5 326.8L124.5 332.2L127.5 337.7L130.5 343.1L133.5 348.5L136.5 354.0L139.5 359.4L142.5 364.8L145.5 370.2L148.5 375.6L151.5 381.1L154.5 386.5L157.5 391.9L160.5 397.3L163.5 402.7L166.5 408.1L169.5 413.5L172.5 418.9L175.5 424.3L178.5 429.7L181.5 435.1L184.5 440.5L187.5 445.9L190.5 451.3L193.5 456.7L196.5 462.1L199.5 467.5L202.5 472.8L205.5 478.2L208.5 483.6L211.5 488.9L214.5 494.3L217.5 499.7L220.5 505.0L223.5 510.4L226.5 515.7L229.5 521.1L232.5 526.4L235.5 531.8L238.5 537.1L241.5 542.4L244.5 547.8L247.5 553.1L250.5 558.4L253.5 563.7L256.5 569.0L259.5 574.3L262.5 579.6L265.5 584.9L268.5 590.2L271.5 595.5L274.5 600.7L277.5 606.0L280.5 611.2L283.5 616.5L286.5 621.7L289.5 627.0L292.5 632.2L295.5 637.4L298.5 642.6L301.5 647.8L304.5 653.0L307.5 658.1L310.5 663.3L313.5 668.5L316.5 673.6L319.5 678.7L322.5 683.8L325.5 688.9L328.5 694.0L331.5 699.1L334.5 704.1L337.5 709.2L340.5 714.2L343.5 719.2L346.5 724.2L349.5 729.1L352.5 734.0L355.5 738.9L358.5 743.8L361.5 748.7L364.5 753.5L367.5 758.3L370.5 763.1L373.5 767.8L376.5 772.5L379.5 777.2L382.5 781.8L385.5 786.3L388.5 790.9L391.5 795.3L394.5 799.8L397.5 804.1L400.5 808.4L403.5 812.7L406.5 816.8L409.5 820.9L412.5 824.9L415.5 828.9L418.5 832.7L421.5 836.4L424.5 840.1L427.5 843.6L430.5 847.0L433.5 850.3L436.5 853.4L439.5 856.4L442.5 859.2L445.5 861.8L448.5 864.3L451.5 866.6L454.5 868.7L457.5 870.6L460.5 872.3L463.5 873.7L466.5 874.9L469.5 875.9L472.5 876.6L475.5 877.1L478.5 877.3L481.5 877.2L484.5 876.9L487.5 876.4L490.5 875.6L493.5 874.5L496.5 873.2L499.5 871.7L502.5 870.0L505.5 868.0L508.5 865.9L511.5 863.5L514.5 861.0L517.5 858.3L520.5 855.4L523.5 852.4L526.5 849.2L529.5 845.9L532.5 842.4L535.5 838.9L538.5 835.2L541.5 831.4L544.5 827.6L547.5 823.6L550.5 819.6L553.5 815.5L556.5 811.3L559.5 807.0L562.5 802.7L565.5 798.3L568.5 793.9L571.5 789.4L574.5 784.8L577.5 780.2L580.5 775.6L583.5 770.9L586.5 766.2L589.5 761.5L592.5 756.7L595.5 751.9L598.5 747.1L601.5 742.2L604.5 737.3L607.5 732.4L610.5 727.5L613.5 722.5L616.5 717.5L619.5 712.5L622.5 707.5L625.5 702.5L628.5 697.4L631.5 692.3L634.5 687.2L637.5 682.1L640.5 677.0L643.5 671.9L646.5 666.7L649.5 661.6L652.5 656.4L655.5 651.2L658.5 646.1L661.5 640.9L664.5 635.7L667.5 630.4L670.5 625.2L673.5 620.0L676.5 614.7L679.5 609.5L682.5 604.2L685.5 599.0L688.5 593.7L691.5 588.4L694.5 583.1L697.5 577.8L700.5 572.5L703.5 567.2L706.5 561.9L709.5 556.6L712.5 551.3L715.5 546.0L718.5 540.7L721.5 535.3L724.5 530.0L727.5 524.7L730.5 519.3L733.5 514.0L736.5 508.6L739.5 503.2L742.5 497.9L745.5 492.5L748.5 487.2L751.5 481.8L754.5 476.4L757.5 471.0L760.5 465.7L763.5 460.3L766.5 454.9L769.5 449.5L772.5 444.1L775.5 438.7L778.5 433.3L781.5 427.9L784.5 422.5L787.5 417.1L790.5 411.7L793.5 406.3L796.5 400.9L799.5 395.5L802.5 390.1L805.5 384.7L808.5 379.3L811.5 373.8L814.5 368.4L817.5 363.0L820.5 357.6L823.5 352.1L826.5 346.7L829.5 341.3L832.5 335.9L835.5 330.4L838.5 325.0L841.5 319.6L844.5 314.1L847.5 308.7L850.5 303.2L853.5 297.8L856.5 292.4L859.5 289.5L862.5 289.5L865.5 289.5L868.5 289.5L871.5 289.5L874.5 289.5" stroke="#0cacea" stroke-width="1.8" fill="none" stroke-linejoin="round"/><path d="M76.5 289.5L79.5 289.5L82.5 289.5L85.5 289.5L88.5 289.5L91.5 289.5L94.5 289.5L97.5 289.5L100.5 289.5L103.5 289.5L106.5 289.5L109.5 289.5L112.5 289.5L115.5 289.5L118.5 294.9L121.5 300.5L124.5 306.1L127.5 311.7L130.5 317.4L133.5 323.0L136.5 328.6L139.5 334.2L142.5 339.8L145.5 345.4L148.5 351.1L151.5 356.7L154.5 362.3L157.5 367.9L160.5 373.5L163.5 379.1L166.5 384.7L169.5 390.3L172.5 395.9L175.5 401.5L178.5 407.0L181.5 412.6L184.5 418.2L187.5 423.8L190.5 429.4L193.5 434.9L196.5 440.5L199.5 446.1L202.5 451.6L205.5 457.2L208.5 462.8L211.5 468.3L214.5 473.9L217.5 479.4L220.5 485.0L223.5 490.5L226.5 496.0L229.5 501.6L232.5 507.1L235.5 512.6L238.5 518.1L241.5 523.6L244.5 529.1L247.5 534.6L250.5 540.1L253.5 545.6L256.5 551.1L259.5 556.6L262.5 562.0L265.5 567.5L268.5 572.9L271.5 578.4L274.5 583.8L277.5 589.3L280.5 594.7L283.5 600.1L286.5 605.5L289.5 610.9L292.5 616.3L295.5 621.7L298.5 627.0L301.5 632.4L304.5 637.7L307.5 643.1L310.5 648.4L313.5 653.7L316.5 659.0L319.5 664.3L322.5 669.5L325.5 674.8L328.5 680.0L331.5 685.2L334.5 690.4L337.5 695.6L340.5 700.7L343.5 705.9L346.5 711.0L349.5 716.0L352.5 721.1L355.5 726.1L358.5 731.1L361.5 736.1L364.5 741.1L367.5 746.0L370.5 750.9L373.5 755.7L376.5 760.5L379.5 765.2L382.5 769.9L385.5 774.6L388.5 779.2L391.5 783.8L394.5 788.3L397.5 792.7L400.5 797.1L403.5 801.4L406.5 805.6L409.5 809.8L412.5 813.8L415.5 817.8L418.5 821.6L421.5 825.4L424.5 829.1L427.5 832.6L430.5 836.0L433.5 839.3L436.5 842.4L439.5 845.4L442.5 848.2L445.5 850.9L448.5 853.3L451.5 855.6L454.5 857.7L457.5 859.5L460.5 861.2L463.5 862.6L466.5 863.8L469.5 864.7L472.5 865.5L475.5 865.9L478.5 866.1L481.5 866.1L484.5 865.8L487.5 865.2L490.5 864.5L493.5 863.4L496.5 862.2L499.5 860.7L502.5 858.9L505.5 857.0L508.5 854.9L511.5 852.5L514.5 850.0L517.5 847.3L520.5 844.4L523.5 841.4L526.5 838.2L529.5 834.9L532.5 831.4L535.5 827.9L538.5 824.2L541.5 820.4L544.5 816.5L547.5 812.5L550.5 808.4L553.5 804.2L556.5 800.0L559.5 795.6L562.5 791.2L565.5 786.8L568.5 782.3L571.5 777.7L574.5 773.1L577.5 768.4L580.5 763.7L583.5 758.9L586.5 754.1L589.5 749.2L592.5 744.3L595.5 739.4L598.5 734.5L601.5 729.5L604.5 724.5L607.5 719.4L610.5 714.4L613.5 709.3L616.5 704.1L619.5 699.0L622.5 693.8L625.5 688.7L628.5 683.5L631.5 678.3L634.5 673.0L637.5 667.8L640.5 662.5L643.5 657.2L646.5 651.9L649.5 646.6L652.5 641.3L655.5 636.0L658.5 630.6L661.5 625.2L664.5 619.9L667.5 614.5L670.5 609.1L673.5 603.7L676.5 598.3L679.5 592.9L682.5 587.5L685.5 582.0L688.5 576.6L691.5 571.1L694.5 565.7L697.5 560.2L700.5 554.7L703.5 549.3L706.5 543.8L709.5 538.3L712.5 532.8L715.5 527.3L718.5 521.8L721.5 516.3L724.5 510.8L727.5 505.2L730.5 499.7L733.5 494.2L736.5 488.6L739.5 483.1L742.5 477.6L745.5 472.0L748.5 466.5L751.5 460.9L754.5 455.4L757.5 449.8L760.5 444.2L763.5 438.7L766.5 433.1L769.5 427.5L772.5 421.9L775.5 416.4L778.5 410.8L781.5 405.2L784.5 399.6L787.5 394.0L790.5 388.4L793.5 382.8L796.5 377.2L799.5 371.6L802.5 366.0L805.5 360.4L808.5 354.8L811.5 349.2L814.5 343.6L817.5 338.0L820.5 332.3L823.5 326.7L826.5 321.1L829.5 315.5L832.5 309.9L835.5 304.2L838.5 298.6L841.5 293.0L844.5 289.5L847.5 289.5L850.5 289.5L853.5 289.5L856.5 289.5L859.5 289.5L862.5 289.5L865.5 289.5L868.5 289.5L871.5 289.5L874.5 289.5" stroke="#e8232a" stroke-width="1.8" fill="none" stroke-linejoin="round"/><g fill="#0cacea"><circle cx="142.2" cy="357.5" r="4.3"/><circle cx="165" cy="402.8" r="4.3"/><circle cx="188" cy="445.6" r="4.3"/><circle cx="211.1" cy="488.6" r="4.3"/><circle cx="233.9" cy="531.1" r="4.3"/><circle cx="256.7" cy="573.3" r="4.3"/><circle cx="280.3" cy="613.5" r="4.3"/><circle cx="302.8" cy="653.6" r="4.3"/><circle cx="325.6" cy="687.8" r="4.3"/><circle cx="348.6" cy="725.8" r="4.3"/><circle cx="371.7" cy="764.7" r="4.3"/><circle cx="395" cy="796.7" r="4.3"/><circle cx="417.8" cy="821.7" r="4.3"/><circle cx="440.8" cy="842" r="4.3"/><circle cx="463.6" cy="852.8" r="4.3"/><circle cx="485.8" cy="856.4" r="4.3"/><circle cx="508.9" cy="848.9" r="4.3"/><circle cx="531.7" cy="834.2" r="4.3"/><circle cx="554.8" cy="810.8" r="4.3"/><circle cx="577.3" cy="782.1" r="4.3"/><circle cx="600.7" cy="744.4" r="4.3"/><circle cx="623.7" cy="704" r="4.3"/><circle cx="646.5" cy="663.5" r="4.3"/><circle cx="669.2" cy="627.7" r="4.3"/><circle cx="692.7" cy="584.8" r="4.3"/><circle cx="715.7" cy="539.8" r="4.3"/><circle cx="739" cy="499.8" r="4.3"/><circle cx="762" cy="457" r="4.3"/><circle cx="785" cy="411.6" r="4.3"/><circle cx="807.6" cy="366.6" r="4.3"/></g><g fill="#e8232a"><circle cx="142.2" cy="338.9" r="4.3"/><circle cx="165" cy="381.7" r="4.3"/><circle cx="188" cy="422.8" r="4.3"/><circle cx="211.1" cy="467.8" r="4.3"/><circle cx="233.9" cy="508.9" r="4.3"/><circle cx="256.7" cy="553.9" r="4.3"/><circle cx="280.3" cy="596.5" r="4.3"/><circle cx="302.8" cy="638.9" r="4.3"/><circle cx="325.6" cy="676.7" r="4.3"/><circle cx="348.6" cy="714.7" r="4.3"/><circle cx="371.7" cy="756.4" r="4.3"/><circle cx="395" cy="789.7" r="4.3"/><circle cx="417.8" cy="815.6" r="4.3"/><circle cx="440.8" cy="837.8" r="4.3"/><circle cx="463.6" cy="848.9" r="4.3"/><circle cx="485.8" cy="851.7" r="4.3"/><circle cx="508.9" cy="843.3" r="4.3"/><circle cx="531.7" cy="825.3" r="4.3"/><circle cx="554.8" cy="799" r="4.3"/><circle cx="577.3" cy="770.4" r="4.3"/><circle cx="600.7" cy="731" r="4.3"/><circle cx="623.7" cy="692.7" r="4.3"/><circle cx="646.5" cy="650" r="4.3"/><circle cx="669.2" cy="614.5" r="4.3"/><circle cx="692.7" cy="570.3" r="4.3"/><circle cx="715.7" cy="523.4" r="4.3"/><circle cx="739" cy="483.7" r="4.3"/><circle cx="762" cy="440.6" r="4.3"/><circle cx="785" cy="397.4" r="4.3"/><circle cx="807.6" cy="353" r="4.3"/></g></svg>
<div class="a" style="left:749px;top:214px;width:45px;height:50px;border:1px solid #e8e000;border-left:3px solid #f4f000;background:linear-gradient(#a0b4c0 0,#6a8696 30%,#0e2c3a 50%,#020608 80%,#000 100%);"></div>
<svg class="a" style="left:749px;top:214px;" width="45" height="50" viewBox="0 0 45 50"><path d="M17 10 L37 39.5 M37 10 L17 39.5" stroke="#fff" stroke-width="6.3" stroke-linecap="round"/></svg>
<div class="a" style="left:796px;top:214px;width:48px;height:50px;border:1px solid #e8e000;border-left:5px solid #f4f000;background:linear-gradient(#a0b4c0 0,#6a8696 30%,#0e2c3a 50%,#020608 80%,#000 100%);"></div>
<svg class="a" style="left:796px;top:214px;" width="48" height="50" viewBox="0 0 48 50"><path d="M20.5 10.7 L29.4 25.4 L39.3 10.7 M29.4 25.4 V39.8" stroke="#fff" stroke-width="6.3" stroke-linecap="round" stroke-linejoin="round" fill="none"/></svg>
<div class="a" style="left:847px;top:214px;width:49px;height:50px;border:1px solid #7a8890;border-left:2px solid #8a9298;background:linear-gradient(#a0b4c0 0,#6a8696 30%,#0e2c3a 50%,#020608 80%,#000 100%);"></div>
<svg class="a" style="left:847px;top:214px;" width="49" height="50" viewBox="0 0 49 50"><defs><linearGradient id="camg" x1="0" y1="0" x2="0" y2="1"><stop offset="0" stop-color="#f0f0f0"/><stop offset="1" stop-color="#a8a8a8"/></linearGradient></defs><rect x="10" y="15.5" width="37" height="22.5" rx="2.5" fill="url(#camg)"/><rect x="19" y="11" width="14" height="6" rx="1.5" fill="#d8d8d8"/><line x1="10" y1="23" x2="47" y2="23" stroke="#1a3a48" stroke-width="1.5"/><circle cx="28.5" cy="27" r="7.5" fill="#0a2a3a"/><path d="M25 25 Q26 22 28.5 21.5" stroke="#9ab" stroke-width="1.2" fill="none"/><rect x="38" y="18" width="4" height="2" fill="#68a0b8"/></svg>
<div class="a" style="left:898px;top:214px;width:52px;height:50px;border:1px solid #7a8890;border-left:2px solid #8a9298;background:linear-gradient(#a0b4c0 0,#6a8696 30%,#0e2c3a 50%,#020608 80%,#000 100%);"></div>
<svg class="a" style="left:898px;top:214px;" width="52" height="50" viewBox="0 0 52 50"><defs><linearGradient id="mgg" x1="0" y1="0" x2="0" y2="1"><stop offset="0" stop-color="#60a8f0"/><stop offset="0.5" stop-color="#1a70d8"/><stop offset="1" stop-color="#30a8f0"/></linearGradient></defs><line x1="11" y1="42" x2="21" y2="31" stroke="#c8c8c8" stroke-width="4.5" stroke-linecap="round"/><circle cx="32.2" cy="19.6" r="13.5" fill="url(#mgg)" stroke="#e4e0dc" stroke-width="3.5"/><path d="M20 19.6 H44.5" stroke="#a0d0f8" stroke-width="0.8"/></svg>
<div class="a" style="left:1px;top:944px;width:949px;height:7px;background:linear-gradient(#e6e9f0,#d2d6de 75%,#b9bdc5)"></div>
<div class="a" style="left:1px;top:951px;width:949px;height:48px;background:linear-gradient(#fbfbfc 0,#e3e5e9 19px,#c9ccd2 19px,#dbdee3 48px)"></div>
<svg class="a" style="left:455px;top:946px;" width="40" height="4" viewBox="0 0 40 4"><path d="M1 1.5 H39" stroke="#8a8e96" stroke-width="1.5" stroke-dasharray="1.5 1.5"/></svg>
<svg class="a" style="left:649px;top:959px;" width="42" height="41" viewBox="0 0 42 41"><defs><linearGradient id="c3" x1="0" y1="0" x2="0" y2="1"><stop offset="0" stop-color="#e81010"/><stop offset="0.15" stop-color="#f0d010"/><stop offset="0.4" stop-color="#30c030"/><stop offset="0.6" stop-color="#20c0d0"/><stop offset="0.8" stop-color="#3040f0"/><stop offset="1" stop-color="#101080"/></linearGradient><radialGradient id="c3b" cx="50%" cy="40%" r="60%"><stop offset="0" stop-color="#30c8d8"/><stop offset="0.5" stop-color="#3040e8"/><stop offset="1" stop-color="#101060"/></radialGradient></defs><path d="M1 13 L12 7 H30 L41 13 V40 H1 Z" fill="#000"/><ellipse cx="21" cy="30" rx="19" ry="8.5" fill="url(#c3b)"/><path d="M21 1 C17.5 1 16 7 14 15 C12 23 8 27 4 30 C10 35 32 35 38 30 C34 27 30 23 28 15 C26 7 24.5 1 21 1Z" fill="url(#c3)"/></svg>
<svg class="a" style="left:700px;top:959px;" width="42" height="40" viewBox="0 0 42 40"><defs><radialGradient id="rg"><stop offset="0" stop-color="#ffffff"/><stop offset="0.12" stop-color="#e060c0"/><stop offset="0.3" stop-color="#f02040"/><stop offset="0.45" stop-color="#f0e020"/><stop offset="0.62" stop-color="#40d040"/><stop offset="0.8" stop-color="#30c0e0"/><stop offset="0.95" stop-color="#3050c0"/><stop offset="1" stop-color="#203070"/></radialGradient></defs><circle cx="21" cy="20" r="19.5" fill="url(#rg)" stroke="#303848" stroke-width="1.5"/></svg>
<svg class="a" style="left:752px;top:960px;" width="40" height="39" viewBox="0 0 40 39"><rect x="0" y="0" width="39" height="39" fill="#000"/><path d="M0 6.5H39M0 13.5H39M0 20.5H39M0 27.5H39M0 34.5H39M6.5 0V39M13.5 0V39M20.5 0V39M27.5 0V39M34.5 0V39" stroke="#3a7a98" stroke-width="1.3"/><path d="M2 38 C10 36 14 0 19.5 0 C25 0 29 36 37 38" stroke="#fff" stroke-width="2.2" fill="none"/></svg>
<svg class="a" style="left:803px;top:960px;" width="40" height="39" viewBox="0 0 40 39"><rect x="0" y="0" width="39" height="39" fill="#000"/><g fill="#2ab0f0"><circle cx="7" cy="6" r="3.2"/><circle cx="15" cy="10" r="3"/><circle cx="10" cy="17" r="3"/><circle cx="19" cy="20" r="3"/><circle cx="24" cy="25" r="3"/><circle cx="33" cy="25" r="3"/><circle cx="16" cy="29" r="3"/><circle cx="4" cy="33" r="3"/></g><circle cx="27.5" cy="11" r="3.5" fill="#f0e010"/></svg>
<div class="a" style="left:848px;top:952px;width:53px;height:47px;background:linear-gradient(#fdd09a,#fbb664)"></div>
<svg class="a" style="left:852px;top:963px;" width="44" height="33" viewBox="0 0 44 33"><defs><linearGradient id="m2g" x1="0" y1="0" x2="0" y2="1"><stop offset="0" stop-color="#40b8e8"/><stop offset="1" stop-color="#1a6a98"/></linearGradient></defs><path d="M2 31 V8 H9 L15 20 L21 8 H28 V31 H22 V18 L17 27 H13 L8 18 V31 Z" fill="url(#m2g)"/><path d="M27 4 Q27 1 31 1 H38 Q42 1 42 5 V8 Q42 11 38 11 H33 V13 H42 V16 H27 V10 Q27 8 31 8 H36 V5 H27 Z" fill="url(#m2g)"/></svg>
<svg class="a" style="left:916px;top:968px;" width="16" height="22" viewBox="0 0 16 22"><path d="M2 2 L6 5.5 L2 9 M8 2 L12 5.5 L8 9" stroke="#8a8e96" stroke-width="1.3" fill="none"/><path d="M3.5 14.5 H11.5 L7.5 18.5Z" fill="#8a8e96"/></svg>
<div class="a" style="left:951px;top:179px;width:5px;height:821px;background:#cfd3db"></div>
<div class="a" style="left:956px;top:182px;width:962px;height:39px;background:linear-gradient(#d3d7df,#e4e7ee 70%,#eceff4);border-top:1px solid #74767c;box-shadow:inset 0 1px 0 #fff"></div>
<div class="a" style="left:956px;top:182px;width:1px;height:816px;background:#7a7474"></div>
<div class="a" style="left:1918px;top:182px;width:2px;height:816px;background:#f8f6f6"></div>
<svg class="a" style="left:960px;top:194px;" width="10" height="14" viewBox="0 0 10 14"><path d="M8 1 L1.5 6.5 L8 12 Z" fill="none" stroke="#8a8e96" stroke-width="1.2"/></svg>
<svg class="a" style="left:1898px;top:194px;" width="10" height="14" viewBox="0 0 10 14"><path d="M2 1 L8.5 6.5 L2 12 Z" fill="none" stroke="#8a8e96" stroke-width="1.2"/></svg>
<svg class="a" style="left:977px;top:183px;" width="605" height="38" viewBox="0 0 605 38"><defs><linearGradient id="tabc" x1="0" y1="0" x2="0" y2="1"><stop offset="0" stop-color="#00c6f6"/><stop offset="1" stop-color="#00a8e4"/></linearGradient></defs><path d="M0.5 37.5 L37 1.5 H120 V37.5 Z" fill="#03507f"/><path d="M0.5 37.5 L37 1.5 H120" fill="none" stroke="#fff" stroke-width="1.2"/><rect x="120" y="1" width="2" height="37" fill="#b4b8c0"/><path d="M122 8 L128 1.5 H208 V37.5 H122 Z" fill="#03507f"/><path d="M122 8 L128 1.5 H208" fill="none" stroke="#e0e4ea" stroke-width="1"/><rect x="208" y="1" width="2" height="37" fill="#b4b8c0"/><path d="M210 8 L216 1.5 H372 L338 37.5 H210 Z" fill="#03507f"/><path d="M210 8 L216 1.5 H372" fill="none" stroke="#e0e4ea" stroke-width="1"/><path d="M338 37.5 L373 1.5 H488.5 V37.5 Z" fill="url(#tabc)"/><path d="M338 37.5 L373 1.5 H488.5" fill="none" stroke="#fff" stroke-width="1.2"/><rect x="488.5" y="1" width="1.5" height="37" fill="#b4b8c0"/><path d="M490 8 L496 1.5 H601 V37.5 H490 Z" fill="#03507f"/><path d="M490 8 L496 1.5 H601" fill="none" stroke="#e0e4ea" stroke-width="1"/><rect x="601" y="1" width="2" height="37" fill="#b4b8c0"/></svg>
<svg class="a" style="left:1014px;top:188px;" width="34" height="30" viewBox="0 0 34 30"><rect x="10" y="4" width="4" height="7" fill="#d81838"/><path d="M4 15 V28 H30 V15 L17 5 Z" fill="#f0e8d0"/><rect x="12" y="17" width="9" height="11" fill="#a0601a"/><path d="M2 15 L17 3 L32 15" fill="none" stroke="#e01830" stroke-width="3.2" stroke-linecap="round" stroke-linejoin="round"/><rect x="3" y="27" width="28" height="2" fill="#c8b890"/></svg>
<div class="t" style="top:195.17px;font-size:13.5px;color:#fff;left:1049.80px;">Home</div>
<svg class="a" style="left:1106px;top:186px;" width="34" height="32" viewBox="0 0 34 32"><g fill="#d8d8d8"><circle cx="13" cy="12" r="9"/><path d="M13 0 V24 M1 12 H25 M4.5 3.5 L21.5 20.5 M21.5 3.5 L4.5 20.5" stroke="#d0d0d0" stroke-width="4.5"/></g><circle cx="13" cy="12" r="3.2" fill="#000"/><g fill="#e0e0e0"><circle cx="26" cy="24" r="5.5"/><path d="M26 16.5 V31.5 M18.5 24 H33.5 M21 19 L31 29 M31 19 L21 29" stroke="#d8d8d8" stroke-width="3"/></g><circle cx="26" cy="24" r="2" fill="#000"/></svg>
<div class="t" style="top:195.17px;font-size:13.5px;color:#fff;left:1140.40px;">Setup</div>
<svg class="a" style="left:1195px;top:185px;" width="30" height="32" viewBox="0 0 30 32"><defs><linearGradient id="dbb" x1="0" y1="0" x2="1" y2="0"><stop offset="0" stop-color="#a8a8a8"/><stop offset="0.45" stop-color="#f4f4f4"/><stop offset="1" stop-color="#909090"/></linearGradient></defs><rect x="1" y="10" width="28" height="6" rx="1.5" fill="url(#dbb)"/><rect x="1" y="17.5" width="28" height="6" rx="1.5" fill="url(#dbb)"/><rect x="1" y="25" width="28" height="6.5" rx="1.5" fill="url(#dbb)"/><path d="M9.5 0 H20.5 V11 H27 L15 24 L3 11 H9.5 Z" fill="#18a8e0"/></svg>
<div class="t" style="top:195.17px;font-size:13.5px;color:#fff;left:1233.00px;clip-path:inset(0 0 0 0);">Data Acquisition</div>
<svg class="a" style="left:977px;top:183px;" width="605" height="38" viewBox="0 0 605 38"><defs><linearGradient id="tabc2" x1="0" y1="0" x2="0" y2="1"><stop offset="0" stop-color="#00c6f6"/><stop offset="1" stop-color="#00a8e4"/></linearGradient></defs><path d="M338 37.5 L373 1.5 H488.5 V37.5 Z" fill="url(#tabc2)"/><path d="M338 37.5 L373 1.5 H488.5" fill="none" stroke="#fff" stroke-width="1.2"/></svg>
<svg class="a" style="left:1346.5px;top:194px;" width="32" height="23" viewBox="0 0 32 23"><defs><linearGradient id="m2t1" x1="0" y1="0" x2="0" y2="1"><stop offset="0" stop-color="#ffffff"/><stop offset="1" stop-color="#a8a8a8"/></linearGradient></defs><g transform="scale(0.7273,0.7419)"><path d="M1 30 V8 H9 L15 19 L21 8 H29 V30 H23 V18 L17 27 H13 L7 18 V30 Z" fill="url(#m2t1)"/><path d="M29 4 Q29 0.5 33 0.5 H39.5 Q43.5 0.5 43.5 4.5 V7 Q43.5 10.5 39.5 10.5 H35 V12.5 H43.5 V16 H29 V10 Q29 7 33 7 H38 V4 H29 Z" fill="url(#m2t1)"/></g></svg>
<div class="t" style="top:195.44px;font-size:13.3px;color:#000;font-weight:bold;left:1386.60px;">M2 Results</div>
<svg class="a" style="left:1473.3px;top:194px;" width="32" height="23" viewBox="0 0 32 23"><defs><linearGradient id="m2t2" x1="0" y1="0" x2="0" y2="1"><stop offset="0" stop-color="#ffffff"/><stop offset="1" stop-color="#a8a8a8"/></linearGradient></defs><g transform="scale(0.7273,0.7419)"><path d="M1 30 V8 H9 L15 19 L21 8 H29 V30 H23 V18 L17 27 H13 L7 18 V30 Z" fill="url(#m2t2)"/><path d="M29 4 Q29 0.5 33 0.5 H39.5 Q43.5 0.5 43.5 4.5 V7 Q43.5 10.5 39.5 10.5 H35 V12.5 H43.5 V16 H29 V10 Q29 7 33 7 H38 V4 H29 Z" fill="url(#m2t2)"/></g></svg>
<div class="t" style="top:195.02px;font-size:13.8px;color:#fff;left:1509.50px;">M2 Setup</div>
<div class="a" style="left:957px;top:221px;width:961px;height:4px;background:linear-gradient(to right,#00b6f2,#00d8fc)"></div>
<div class="a" style="left:957px;top:221px;width:4px;height:777px;background:#00b6f0"></div>
<div class="a" style="left:1914px;top:221px;width:4px;height:777px;background:#00d8fc"></div>
<div class="a" style="left:957px;top:994px;width:961px;height:4px;background:linear-gradient(to right,#00b8f2,#00d8fc)"></div>
<div class="a" style="left:961px;top:225px;width:932px;height:748px;background:#dfe2e9;overflow:hidden"><div class="a" style="left:-961px;top:-225px;width:1920px;height:1080px">
<div class="a" style="left:977px;top:259px;width:8px;height:1px;background:#0b4d7a"></div>
<div class="a" style="left:978px;top:260px;width:8px;height:1px;background:#fff"></div>
<div class="a" style="left:1115.5px;top:259px;width:181.5px;height:1px;background:#0b4d7a"></div>
<div class="a" style="left:1116.5px;top:260px;width:181.5px;height:1px;background:#fff"></div>
<div class="a" style="left:977px;top:259px;width:1px;height:557px;background:#0b4d7a"></div>
<div class="a" style="left:978px;top:260px;width:1px;height:557px;background:#fff"></div>
<div class="a" style="left:1297px;top:259px;width:1px;height:558px;background:#0b4d7a"></div>
<div class="a" style="left:1298px;top:260px;width:1px;height:558px;background:#fff"></div>
<div class="a" style="left:977px;top:816px;width:320px;height:1px;background:#0b4d7a"></div>
<div class="a" style="left:978px;top:817px;width:320px;height:1px;background:#fff"></div>
<svg class="a" style="left:995.5px;top:250px;" width="60" height="30" viewBox="0 0 60 30"><defs><linearGradient id="lgX" x1="0" y1="0" x2="0" y2="1"><stop offset="0" stop-color="#4ec4f0"/><stop offset="0.55" stop-color="#2080b8"/><stop offset="1" stop-color="#15608f"/></linearGradient></defs><text x="0" y="18" font-family="Liberation Sans" font-weight="bold" font-size="24.5" fill="url(#lgX)">X</text></svg>
<div class="t" style="top:252.00px;font-size:16.3px;color:#125a8e;left:1028.70px;">Parameters</div>
<div class="a" style="left:990px;top:286px;width:8px;height:1px;background:#0b4d7a"></div>
<div class="a" style="left:991px;top:287px;width:8px;height:1px;background:#fff"></div>
<div class="a" style="left:1091px;top:286px;width:181px;height:1px;background:#0b4d7a"></div>
<div class="a" style="left:1092px;top:287px;width:181px;height:1px;background:#fff"></div>
<div class="a" style="left:990px;top:286px;width:1px;height:192px;background:#0b4d7a"></div>
<div class="a" style="left:991px;top:287px;width:1px;height:192px;background:#fff"></div>
<div class="a" style="left:1272px;top:286px;width:1px;height:193px;background:#0b4d7a"></div>
<div class="a" style="left:1273px;top:287px;width:1px;height:193px;background:#fff"></div>
<div class="a" style="left:990px;top:478px;width:282px;height:1px;background:#0b4d7a"></div>
<div class="a" style="left:991px;top:479px;width:282px;height:1px;background:#fff"></div>
<div class="t" style="top:278.06px;font-size:16px;color:#125a8e;left:1001.70px;">Before Lens</div>
<div class="a" style="left:990px;top:493px;width:8px;height:1px;background:#0b4d7a"></div>
<div class="a" style="left:991px;top:494px;width:8px;height:1px;background:#fff"></div>
<div class="a" style="left:1080px;top:493px;width:192px;height:1px;background:#0b4d7a"></div>
<div class="a" style="left:1081px;top:494px;width:192px;height:1px;background:#fff"></div>
<div class="a" style="left:990px;top:493px;width:1px;height:192px;background:#0b4d7a"></div>
<div class="a" style="left:991px;top:494px;width:1px;height:192px;background:#fff"></div>
<div class="a" style="left:1272px;top:493px;width:1px;height:193px;background:#0b4d7a"></div>
<div class="a" style="left:1273px;top:494px;width:1px;height:193px;background:#fff"></div>
<div class="a" style="left:990px;top:685px;width:282px;height:1px;background:#0b4d7a"></div>
<div class="a" style="left:991px;top:686px;width:282px;height:1px;background:#fff"></div>
<div class="t" style="top:485.76px;font-size:16px;color:#125a8e;left:1001.70px;">After Lens</div>
<div class="a" style="left:990px;top:706px;width:8px;height:1px;background:#0b4d7a"></div>
<div class="a" style="left:991px;top:707px;width:8px;height:1px;background:#fff"></div>
<div class="a" style="left:1036px;top:706px;width:236px;height:1px;background:#0b4d7a"></div>
<div class="a" style="left:1037px;top:707px;width:236px;height:1px;background:#fff"></div>
<div class="a" style="left:990px;top:706px;width:1px;height:100px;background:#0b4d7a"></div>
<div class="a" style="left:991px;top:707px;width:1px;height:100px;background:#fff"></div>
<div class="a" style="left:1272px;top:706px;width:1px;height:101px;background:#0b4d7a"></div>
<div class="a" style="left:1273px;top:707px;width:1px;height:101px;background:#fff"></div>
<div class="a" style="left:990px;top:806px;width:282px;height:1px;background:#0b4d7a"></div>
<div class="a" style="left:991px;top:807px;width:282px;height:1px;background:#fff"></div>
<svg class="a" style="left:1000px;top:694px;" width="33" height="23" viewBox="0 0 33 23"><defs><linearGradient id="m2cX" x1="0" y1="0" x2="0" y2="1"><stop offset="0" stop-color="#48c0f0"/><stop offset="1" stop-color="#15608f"/></linearGradient></defs><g transform="scale(0.7500,0.7419)"><path d="M1 30 V8 H9 L15 19 L21 8 H29 V30 H23 V18 L17 27 H13 L7 18 V30 Z" fill="url(#m2cX)"/><path d="M29 4 Q29 0.5 33 0.5 H39.5 Q43.5 0.5 43.5 4.5 V7 Q43.5 10.5 39.5 10.5 H35 V12.5 H43.5 V16 H29 V10 Q29 7 33 7 H38 V4 H29 Z" fill="url(#m2cX)"/></g></svg>
<div class="t" style="top:321.36px;font-size:16px;color:#000;left:1011.00px;">z0:</div>
<div class="t" style="top:321.36px;font-size:16px;color:#000;left:1071.00px;">4044.74</div>
<div class="t" style="top:321.36px;font-size:16px;color:#000;left:1159.30px;">mm</div>
<div class="t" style="top:528.06px;font-size:16px;color:#000;left:1011.00px;">z0:</div>
<div class="t" style="top:528.06px;font-size:16px;color:#000;left:1071.00px;">310.27</div>
<div class="t" style="top:528.06px;font-size:16px;color:#000;left:1159.30px;">mm</div>
<div class="t" style="top:360.66px;font-size:16px;color:#000;left:1011.00px;">d0:</div>
<div class="t" style="top:360.66px;font-size:16px;color:#000;left:1071.00px;">1717.15</div>
<div class="t" style="top:360.66px;font-size:16px;color:#000;left:1159.30px;">&micro;m</div>
<div class="t" style="top:567.36px;font-size:16px;color:#000;left:1011.00px;">d0:</div>
<div class="t" style="top:567.36px;font-size:16px;color:#000;left:1071.00px;">89.94</div>
<div class="t" style="top:567.36px;font-size:16px;color:#000;left:1159.30px;">&micro;m</div>
<div class="t" style="top:399.96px;font-size:16px;color:#000;left:1011.00px;">ZR:</div>
<div class="t" style="top:399.96px;font-size:16px;color:#000;left:1071.00px;">4334.33</div>
<div class="t" style="top:399.96px;font-size:16px;color:#000;left:1159.30px;">mm</div>
<div class="t" style="top:606.66px;font-size:16px;color:#000;left:1011.00px;">ZR:</div>
<div class="t" style="top:606.66px;font-size:16px;color:#000;left:1071.00px;">11.89</div>
<div class="t" style="top:606.66px;font-size:16px;color:#000;left:1159.30px;">mm</div>
<div class="t" style="top:439.26px;font-size:16px;color:#000;left:1011.00px;">Div:</div>
<div class="t" style="top:439.26px;font-size:16px;color:#000;left:1071.00px;">0.40</div>
<div class="t" style="top:439.26px;font-size:16px;color:#000;left:1159.30px;">mrad</div>
<div class="t" style="top:645.96px;font-size:16px;color:#000;left:1011.00px;">Div:</div>
<div class="t" style="top:645.96px;font-size:16px;color:#000;left:1071.00px;">7.56</div>
<div class="t" style="top:645.96px;font-size:16px;color:#000;left:1159.30px;">mrad</div>
<div class="t" style="top:736.39px;font-size:17.5px;color:#000;font-weight:bold;left:1018.50px;letter-spacing:0.3px;">M2:</div>
<div class="t" style="top:736.39px;font-size:17.5px;color:#000;font-weight:bold;left:1072.50px;letter-spacing:1.2px;">1.00</div>
<div class="t" style="top:777.66px;font-size:16px;color:#000;left:1017.20px;">BPP:</div>
<div class="t" style="top:777.66px;font-size:16px;color:#000;left:1071.00px;">0.17</div>
<div class="t" style="top:777.40px;font-size:16.3px;color:#000;left:1159.30px;">mrad*mm</div>
<div class="a" style="left:1332.5px;top:259px;width:8.0px;height:1px;background:#0b4d7a"></div>
<div class="a" style="left:1333.5px;top:260px;width:8.0px;height:1px;background:#fff"></div>
<div class="a" style="left:1471.0px;top:259px;width:181.5px;height:1px;background:#0b4d7a"></div>
<div class="a" style="left:1472.0px;top:260px;width:181.5px;height:1px;background:#fff"></div>
<div class="a" style="left:1332.5px;top:259px;width:1px;height:557px;background:#0b4d7a"></div>
<div class="a" style="left:1333.5px;top:260px;width:1px;height:557px;background:#fff"></div>
<div class="a" style="left:1652.5px;top:259px;width:1px;height:558px;background:#0b4d7a"></div>
<div class="a" style="left:1653.5px;top:260px;width:1px;height:558px;background:#fff"></div>
<div class="a" style="left:1332.5px;top:816px;width:320.0px;height:1px;background:#0b4d7a"></div>
<div class="a" style="left:1333.5px;top:817px;width:320.0px;height:1px;background:#fff"></div>
<svg class="a" style="left:1351.0px;top:250px;" width="60" height="30" viewBox="0 0 60 30"><defs><linearGradient id="lgY" x1="0" y1="0" x2="0" y2="1"><stop offset="0" stop-color="#4ec4f0"/><stop offset="0.55" stop-color="#2080b8"/><stop offset="1" stop-color="#15608f"/></linearGradient></defs><text x="0" y="18" font-family="Liberation Sans" font-weight="bold" font-size="24.5" fill="url(#lgY)">Y</text></svg>
<div class="t" style="top:252.00px;font-size:16.3px;color:#125a8e;left:1384.20px;">Parameters</div>
<div class="a" style="left:1345.5px;top:286px;width:8.0px;height:1px;background:#0b4d7a"></div>
<div class="a" style="left:1346.5px;top:287px;width:8.0px;height:1px;background:#fff"></div>
<div class="a" style="left:1446.5px;top:286px;width:181.0px;height:1px;background:#0b4d7a"></div>
<div class="a" style="left:1447.5px;top:287px;width:181.0px;height:1px;background:#fff"></div>
<div class="a" style="left:1345.5px;top:286px;width:1px;height:192px;background:#0b4d7a"></div>
<div class="a" style="left:1346.5px;top:287px;width:1px;height:192px;background:#fff"></div>
<div class="a" style="left:1627.5px;top:286px;width:1px;height:193px;background:#0b4d7a"></div>
<div class="a" style="left:1628.5px;top:287px;width:1px;height:193px;background:#fff"></div>
<div class="a" style="left:1345.5px;top:478px;width:282.0px;height:1px;background:#0b4d7a"></div>
<div class="a" style="left:1346.5px;top:479px;width:282.0px;height:1px;background:#fff"></div>
<div class="t" style="top:278.06px;font-size:16px;color:#125a8e;left:1357.20px;">Before Lens</div>
<div class="a" style="left:1345.5px;top:493px;width:8.0px;height:1px;background:#0b4d7a"></div>
<div class="a" style="left:1346.5px;top:494px;width:8.0px;height:1px;background:#fff"></div>
<div class="a" style="left:1435.5px;top:493px;width:192.0px;height:1px;background:#0b4d7a"></div>
<div class="a" style="left:1436.5px;top:494px;width:192.0px;height:1px;background:#fff"></div>
<div class="a" style="left:1345.5px;top:493px;width:1px;height:192px;background:#0b4d7a"></div>
<div class="a" style="left:1346.5px;top:494px;width:1px;height:192px;background:#fff"></div>
<div class="a" style="left:1627.5px;top:493px;width:1px;height:193px;background:#0b4d7a"></div>
<div class="a" style="left:1628.5px;top:494px;width:1px;height:193px;background:#fff"></div>
<div class="a" style="left:1345.5px;top:685px;width:282.0px;height:1px;background:#0b4d7a"></div>
<div class="a" style="left:1346.5px;top:686px;width:282.0px;height:1px;background:#fff"></div>
<div class="t" style="top:485.76px;font-size:16px;color:#125a8e;left:1357.20px;">After Lens</div>
<div class="a" style="left:1348px;top:706px;width:8px;height:1px;background:#0b4d7a"></div>
<div class="a" style="left:1349px;top:707px;width:8px;height:1px;background:#fff"></div>
<div class="a" style="left:1391.5px;top:706px;width:236.0px;height:1px;background:#0b4d7a"></div>
<div class="a" style="left:1392.5px;top:707px;width:236.0px;height:1px;background:#fff"></div>
<div class="a" style="left:1348px;top:706px;width:1px;height:100px;background:#0b4d7a"></div>
<div class="a" style="left:1349px;top:707px;width:1px;height:100px;background:#fff"></div>
<div class="a" style="left:1627.5px;top:706px;width:1px;height:101px;background:#0b4d7a"></div>
<div class="a" style="left:1628.5px;top:707px;width:1px;height:101px;background:#fff"></div>
<div class="a" style="left:1348px;top:806px;width:279.5px;height:1px;background:#0b4d7a"></div>
<div class="a" style="left:1349px;top:807px;width:279.5px;height:1px;background:#fff"></div>
<svg class="a" style="left:1355.5px;top:694px;" width="33" height="23" viewBox="0 0 33 23"><defs><linearGradient id="m2cY" x1="0" y1="0" x2="0" y2="1"><stop offset="0" stop-color="#48c0f0"/><stop offset="1" stop-color="#15608f"/></linearGradient></defs><g transform="scale(0.7500,0.7419)"><path d="M1 30 V8 H9 L15 19 L21 8 H29 V30 H23 V18 L17 27 H13 L7 18 V30 Z" fill="url(#m2cY)"/><path d="M29 4 Q29 0.5 33 0.5 H39.5 Q43.5 0.5 43.5 4.5 V7 Q43.5 10.5 39.5 10.5 H35 V12.5 H43.5 V16 H29 V10 Q29 7 33 7 H38 V4 H29 Z" fill="url(#m2cY)"/></g></svg>
<div class="t" style="top:321.36px;font-size:16px;color:#000;left:1367.50px;">z0:</div>
<div class="t" style="top:321.36px;font-size:16px;color:#000;left:1427.50px;">3803.72</div>
<div class="t" style="top:321.36px;font-size:16px;color:#000;left:1515.80px;">mm</div>
<div class="t" style="top:528.06px;font-size:16px;color:#000;left:1367.50px;">z0:</div>
<div class="t" style="top:528.06px;font-size:16px;color:#000;left:1427.50px;">310.51</div>
<div class="t" style="top:528.06px;font-size:16px;color:#000;left:1515.80px;">mm</div>
<div class="t" style="top:360.66px;font-size:16px;color:#000;left:1367.50px;">d0:</div>
<div class="t" style="top:360.66px;font-size:16px;color:#000;left:1427.50px;">1794.84</div>
<div class="t" style="top:360.66px;font-size:16px;color:#000;left:1515.80px;">&micro;m</div>
<div class="t" style="top:567.36px;font-size:16px;color:#000;left:1367.50px;">d0:</div>
<div class="t" style="top:567.36px;font-size:16px;color:#000;left:1427.50px;">98.31</div>
<div class="t" style="top:567.36px;font-size:16px;color:#000;left:1515.80px;">&micro;m</div>
<div class="t" style="top:399.96px;font-size:16px;color:#000;left:1367.50px;">ZR:</div>
<div class="t" style="top:399.96px;font-size:16px;color:#000;left:1427.50px;">4209.47</div>
<div class="t" style="top:399.96px;font-size:16px;color:#000;left:1515.80px;">mm</div>
<div class="t" style="top:606.66px;font-size:16px;color:#000;left:1367.50px;">ZR:</div>
<div class="t" style="top:606.66px;font-size:16px;color:#000;left:1427.50px;">12.63</div>
<div class="t" style="top:606.66px;font-size:16px;color:#000;left:1515.80px;">mm</div>
<div class="t" style="top:439.26px;font-size:16px;color:#000;left:1367.50px;">Div:</div>
<div class="t" style="top:439.26px;font-size:16px;color:#000;left:1427.50px;">0.43</div>
<div class="t" style="top:439.26px;font-size:16px;color:#000;left:1515.80px;">mrad</div>
<div class="t" style="top:645.96px;font-size:16px;color:#000;left:1367.50px;">Div:</div>
<div class="t" style="top:645.96px;font-size:16px;color:#000;left:1427.50px;">7.78</div>
<div class="t" style="top:645.96px;font-size:16px;color:#000;left:1515.80px;">mrad</div>
<div class="t" style="top:736.39px;font-size:17.5px;color:#000;font-weight:bold;left:1369.50px;letter-spacing:0.3px;">M2:</div>
<div class="t" style="top:736.39px;font-size:17.5px;color:#000;font-weight:bold;left:1429.00px;letter-spacing:1.2px;">1.13</div>
<div class="t" style="top:777.66px;font-size:16px;color:#000;left:1368.20px;">BPP:</div>
<div class="t" style="top:777.66px;font-size:16px;color:#000;left:1427.50px;">0.19</div>
<div class="t" style="top:777.40px;font-size:16.3px;color:#000;left:1515.80px;">mrad*mm</div>
<div class="a" style="left:1690px;top:259px;width:8px;height:1px;background:#0b4d7a"></div>
<div class="a" style="left:1691px;top:260px;width:8px;height:1px;background:#fff"></div>
<div class="a" style="left:1829px;top:259px;width:161px;height:1px;background:#0b4d7a"></div>
<div class="a" style="left:1830px;top:260px;width:161px;height:1px;background:#fff"></div>
<div class="a" style="left:1690px;top:259px;width:1px;height:557px;background:#0b4d7a"></div>
<div class="a" style="left:1691px;top:260px;width:1px;height:557px;background:#fff"></div>
<div class="a" style="left:1990px;top:259px;width:1px;height:558px;background:#0b4d7a"></div>
<div class="a" style="left:1991px;top:260px;width:1px;height:558px;background:#fff"></div>
<div class="a" style="left:1690px;top:816px;width:300px;height:1px;background:#0b4d7a"></div>
<div class="a" style="left:1691px;top:817px;width:300px;height:1px;background:#fff"></div>
<svg class="a" style="left:1699.5px;top:250px;" width="60" height="30" viewBox="0 0 60 30"><defs><linearGradient id="lgXY" x1="0" y1="0" x2="0" y2="1"><stop offset="0" stop-color="#4ec4f0"/><stop offset="0.55" stop-color="#2080b8"/><stop offset="1" stop-color="#15608f"/></linearGradient></defs><text x="0" y="18" font-family="Liberation Sans" font-weight="bold" font-size="24.5" fill="url(#lgXY)">XY</text></svg>
<div class="t" style="top:252.00px;font-size:16.3px;color:#125a8e;left:1741.30px;">Parameters</div>
<div class="a" style="left:1704px;top:286px;width:8px;height:1px;background:#0b4d7a"></div>
<div class="a" style="left:1705px;top:287px;width:8px;height:1px;background:#fff"></div>
<div class="a" style="left:1806px;top:286px;width:184px;height:1px;background:#0b4d7a"></div>
<div class="a" style="left:1807px;top:287px;width:184px;height:1px;background:#fff"></div>
<div class="a" style="left:1704px;top:286px;width:1px;height:192px;background:#0b4d7a"></div>
<div class="a" style="left:1705px;top:287px;width:1px;height:192px;background:#fff"></div>
<div class="a" style="left:1990px;top:286px;width:1px;height:193px;background:#0b4d7a"></div>
<div class="a" style="left:1991px;top:287px;width:1px;height:193px;background:#fff"></div>
<div class="a" style="left:1704px;top:478px;width:286px;height:1px;background:#0b4d7a"></div>
<div class="a" style="left:1705px;top:479px;width:286px;height:1px;background:#fff"></div>
<div class="t" style="top:277.56px;font-size:16px;color:#125a8e;left:1715.50px;">Before Lens</div>
<div class="a" style="left:1704px;top:493px;width:8px;height:1px;background:#0b4d7a"></div>
<div class="a" style="left:1705px;top:494px;width:8px;height:1px;background:#fff"></div>
<div class="a" style="left:1795px;top:493px;width:195px;height:1px;background:#0b4d7a"></div>
<div class="a" style="left:1796px;top:494px;width:195px;height:1px;background:#fff"></div>
<div class="a" style="left:1704px;top:493px;width:1px;height:192px;background:#0b4d7a"></div>
<div class="a" style="left:1705px;top:494px;width:1px;height:192px;background:#fff"></div>
<div class="a" style="left:1990px;top:493px;width:1px;height:193px;background:#0b4d7a"></div>
<div class="a" style="left:1991px;top:494px;width:1px;height:193px;background:#fff"></div>
<div class="a" style="left:1704px;top:685px;width:286px;height:1px;background:#0b4d7a"></div>
<div class="a" style="left:1705px;top:686px;width:286px;height:1px;background:#fff"></div>
<div class="t" style="top:485.26px;font-size:16px;color:#125a8e;left:1715.50px;">After Lens</div>
<div class="t" style="top:320.06px;font-size:16px;color:#000;left:1724.40px;">Delta Z:</div>
<div class="t" style="top:320.06px;font-size:16px;color:#000;left:1839.10px;">241.021</div>
<div class="t" style="top:358.86px;font-size:16px;color:#000;left:1724.40px;">Astigmatism:</div>
<div class="t" style="top:358.26px;font-size:16px;color:#000;left:1839.10px;">80.340</div>
<div class="t" style="top:527.06px;font-size:16px;color:#000;left:1724.40px;">Delta Z:</div>
<div class="t" style="top:527.06px;font-size:16px;color:#000;left:1839.10px;">0.240</div>
<div class="t" style="top:566.86px;font-size:16px;color:#000;left:1724.40px;">Astigmatism</div>
<div class="t" style="top:566.86px;font-size:16px;color:#000;left:1839.10px;">0.080</div>
<div class="a" style="left:990px;top:831px;width:16px;height:16px;border:1px solid #333;background:#fff"></div>
<div class="t" style="top:831.82px;font-size:16.75px;color:#000;left:1010.30px;">Save Data to Acquisition File</div>
<svg class="a" style="left:961px;top:850px;" width="932" height="123" viewBox="0 0 932 123"><rect x="429" y="8" width="399" height="115" fill="#c8cad2"/><path d="M429.3 32.5 Q440.6 75 445.6 123 H429.3 Z" fill="#e6e7ea"/><path d="M429.3 32.5 Q418 75 413 123 H429.3 Z" fill="#fff"/><path d="M429.3 32.5 Q418 75 413 123 M429.3 32.5 Q440.6 75 445.6 123" fill="none" stroke="#18a8d8" stroke-width="1.5"/><path d="M429.3 8 V123" stroke="#000" stroke-width="1.3" stroke-dasharray="4 3"/><path d="M221.8 84.5 H636.2 M222 80 V89 M636 80 V89" stroke="#000" stroke-width="1.4"/><path d="M62 71.5 V34 M62 71.5 H98 M62 71.5 L44 86" stroke="#000" stroke-width="1.4" fill="none"/><path d="M57.5 38 L62 28.5 L66.5 38 L62 36Z M96 67 L105 71.5 L96 76 L98 71.5Z M42.5 81.5 L38.5 91.7 L48 87.5 L45 86Z" fill="#000"/><g font-family="Liberation Sans" font-size="15" fill="#000"><text x="58.5" y="22">y</text><text x="107" y="77">z</text><text x="29" y="102">x</text><text x="314" y="79">z</text><text x="527" y="79">z</text><text x="174" y="117">z</text><text x="583" y="117">z</text></g><g font-family="Liberation Sans" font-size="9" fill="#000"><text x="322" y="82">0</text><text x="535" y="82">0</text><text x="182" y="124">R</text><text x="591" y="124">R</text></g><g font-family="Liberation Sans" font-size="15" font-weight="bold" fill="#000"><text x="177" y="36.7">Before Lens</text><text x="599" y="36.6">After Lens</text></g></svg>
</div></div>
<div class="a" style="left:1893px;top:225px;width:21px;height:748px;background:#f0f0f0"></div>
<svg class="a" style="left:1896px;top:228px;" width="16" height="14" viewBox="0 0 16 14"><path d="M3 9.5 L8 4.5 L13 9.5" fill="none" stroke="#606060" stroke-width="1.6"/></svg>
<div class="a" style="left:1894px;top:246px;width:19px;height:70px;background:#cdcdcd"></div>
<svg class="a" style="left:1896px;top:955px;" width="16" height="14" viewBox="0 0 16 14"><path d="M3 4.5 L8 9.5 L13 4.5" fill="none" stroke="#606060" stroke-width="1.6"/></svg>
<div class="a" style="left:961px;top:973px;width:953px;height:21px;background:#f0f0f0"></div>
<svg class="a" style="left:963px;top:976px;" width="14" height="16" viewBox="0 0 14 16"><path d="M9.5 3 L4.5 8 L9.5 13" fill="none" stroke="#606060" stroke-width="1.6"/></svg>
<div class="a" style="left:982px;top:974px;width:84px;height:19px;background:#cdcdcd"></div>
<svg class="a" style="left:1875px;top:976px;" width="14" height="16" viewBox="0 0 14 16"><path d="M4.5 3 L9.5 8 L4.5 13" fill="none" stroke="#606060" stroke-width="1.6"/></svg>
<div class="a" style="left:0px;top:999px;width:1920px;height:2px;background:#a9adb5"></div>
<div class="a" style="left:0px;top:1001px;width:1920px;height:29px;background:linear-gradient(#e8eaee 0px,#e2e4e9 2px,#b5bac4 10px,#a8aeb6 11px,#b0b5bd 16px,#bcc0c8 28px,#b0b4bc 29px)"></div>
<div class="t" style="top:1009.03px;font-size:13.2px;color:#30343c;left:9.50px;">Displays</div>
<div class="a" style="left:1843px;top:1001px;width:1px;height:29px;background:#9a9ea6"></div>
<div class="a" style="left:1844px;top:1001px;width:76px;height:29px;background:linear-gradient(#e8eaee 0px,#e0e3e8 2px,#c4c8d0 10px,#b8bcc4 11px,#bfc3cb 28px,#b0b4bc 29px)"></div>
<div class="t" style="top:1008.43px;font-size:13.9px;color:#30343c;left:1859.00px;">Controls</div>
<div class="a" style="left:0px;top:1030px;width:1920px;height:50px;background:#eeeeee"></div>
<svg class="a" style="left:19px;top:1044px;" width="22" height="22" viewBox="0 0 22 22"><path d="M0.5 3 L9.5 1.7 V10.3 H0.5Z M10.8 1.5 L21 0 V10.3 H10.8Z M0.5 11.6 H9.5 V20.3 L0.5 19Z M10.8 11.6 H21 V22 L10.8 20.5Z" fill="#000"/></svg>
<svg class="a" style="left:80px;top:1042px;" width="28" height="25" viewBox="0 0 28 25"><path d="M0 2 Q0 0 2 0 H10 L12 3 H27 V22 H0 Z" fill="#e4a820"/><rect x="0" y="4" width="27" height="18" rx="1" fill="#fcd462"/><path d="M5 25 V13 H22 V25 H17.5 V17.5 H9.5 V25 Z" fill="#1f7ad6"/></svg>
<div class="a" style="left:69px;top:1077px;width:41px;height:3px;background:#2b62d0"></div>
<div class="a" style="left:110px;top:1077px;width:10px;height:3px;background:#8aa8e0"></div>
<svg class="a" style="left:141px;top:1040px;" width="31" height="30" viewBox="0 0 31 30"><path d="M2 19 C0 9 10 3 19 5 C26 7 25 13 20 14 C16 15 17 20 19 22 C21 26 14 28 9 26 C5 25 3 23 2 19Z" fill="#b8d8f0" stroke="#7aa0c0" stroke-width="0.8"/><circle cx="6" cy="16" r="2.2" fill="#e03030"/><circle cx="9" cy="10" r="2.2" fill="#40b040"/><circle cx="15" cy="8" r="2.2" fill="#f0a020"/><circle cx="9.5" cy="20.5" r="1.8" fill="#fff"/><path d="M15 28 L26 8" stroke="#e07a18" stroke-width="2.4" stroke-linecap="round"/><path d="M25 9 L30 1 L28 7Z" fill="#c89050" stroke="#c08040" stroke-width="2"/></svg>
<svg class="a" style="left:203px;top:1040px;" width="30" height="30" viewBox="0 0 30 30"><defs><linearGradient id="wpsg" x1="0" y1="0" x2="1" y2="1"><stop offset="0" stop-color="#2a2826"/><stop offset="1" stop-color="#141210"/></linearGradient></defs><rect x="0" y="0" width="30" height="30" rx="4" fill="url(#wpsg)"/><path d="M4.5 9.5 H25.5 L19 24 H16.5 L14 18.5 L11.5 24 H9.5 Z" fill="none" stroke="#e0b080" stroke-width="2.2" stroke-linejoin="round"/><path d="M14 18.5 L17.5 9.5" stroke="#e8c090" stroke-width="2"/></svg>
<div class="a" style="left:193px;top:1077px;width:51px;height:3px;background:#2b62d0"></div>
<div class="a" style="left:250px;top:1030px;width:57px;height:50px;background:#f8f8f8;border-right:1px solid #dcdcdc"></div>
<svg class="a" style="left:265px;top:1040px;" width="30" height="30" viewBox="0 0 30 30"><defs><radialGradient id="tbb" cx="50%" cy="60%" r="60%"><stop offset="0" stop-color="#30c0e0"/><stop offset="0.5" stop-color="#1a60a0"/><stop offset="1" stop-color="#0a2040"/></radialGradient><linearGradient id="tbc" x1="0" y1="0" x2="0" y2="1"><stop offset="0" stop-color="#f02818"/><stop offset="0.3" stop-color="#f0d020"/><stop offset="0.6" stop-color="#40c040"/><stop offset="1" stop-color="#20a0e0"/></linearGradient></defs><rect x="0.5" y="0.5" width="29" height="29" rx="2" fill="#888" stroke="#666"/><rect x="2.5" y="2.5" width="25" height="25" fill="url(#tbb)"/><ellipse cx="15" cy="21" rx="10" ry="4" fill="#2030c0"/><path d="M15 6 C13 6 12.5 14 9 21 C12 24 18 24 21 21 C17.5 14 17 6 15 6Z" fill="url(#tbc)"/></svg>
<div class="a" style="left:250px;top:1077px;width:57px;height:3px;background:#2b62d0"></div>
<div class="a" style="left:307px;top:1077px;width:4px;height:3px;background:#8aa8e0"></div>
<svg class="a" style="left:1648px;top:1048px;" width="20" height="12" viewBox="0 0 20 12"><path d="M2 10 L10 2 L18 10" fill="none" stroke="#000" stroke-width="1.3"/></svg>
<svg class="a" style="left:1676px;top:1046px;" width="24" height="20" viewBox="0 0 24 20"><path d="M2 7 H6 L11 2.5 V17.5 L6 13 H2Z" fill="none" stroke="#000" stroke-width="1.2"/><path d="M14 7.5 Q16 10 14 12.5 M17 5 Q20.5 10 17 15" fill="none" stroke="#000" stroke-width="1.2"/><path d="M20 3 Q24.5 10 20 17" fill="none" stroke="#999" stroke-width="1.2"/></svg>
<svg class="a" style="left:1707px;top:1047px;" width="22" height="16" viewBox="0 0 22 16"><rect x="5.5" y="4.5" width="14" height="9" fill="none" stroke="#000" stroke-width="1.2"/><rect x="19.5" y="7" width="2" height="4" fill="#000"/><rect x="7" y="6" width="6" height="6" fill="#000"/><path d="M2 1 V5 M4 1 V5 M1 5 H5 V8 L3 10 L1 8Z M3 10 V13" stroke="#000" stroke-width="1" fill="none"/></svg>
<svg class="a" style="left:1736px;top:1044px;" width="22" height="22" viewBox="0 0 22 22"><circle cx="11" cy="11" r="9.5" fill="none" stroke="#777" stroke-width="1.2"/><path d="M7 7 L15 15 M15 7 L7 15" stroke="#777" stroke-width="1.6"/></svg>
<div class="t" style="top:1035.66px;font-size:16px;color:#000;left:1507.00px;width:600px;text-align:center;">11:10:36</div>
<div class="t" style="top:1058.50px;font-size:16.3px;color:#000;left:1507.50px;width:600px;text-align:center;">2025/1/18</div>
<svg class="a" style="left:1868px;top:1044px;" width="34" height="32" viewBox="0 0 34 32"><path d="M1 1 H24 V17 H10 L5 22 V17 H1Z" fill="#000"/><path d="M5 6 H20 M5 10 H20 M5 14 H16" stroke="#fff" stroke-width="1.4"/><circle cx="23" cy="19" r="9" fill="#e0e0e0" stroke="#888" stroke-width="1"/><text x="19.5" y="24" font-family="Liberation Sans" font-weight="bold" font-size="14" fill="#000">1</text></svg>
<div class="a" style="left:1914px;top:1030px;width:1px;height:50px;background:#d0d0d0"></div>
</body></html>
